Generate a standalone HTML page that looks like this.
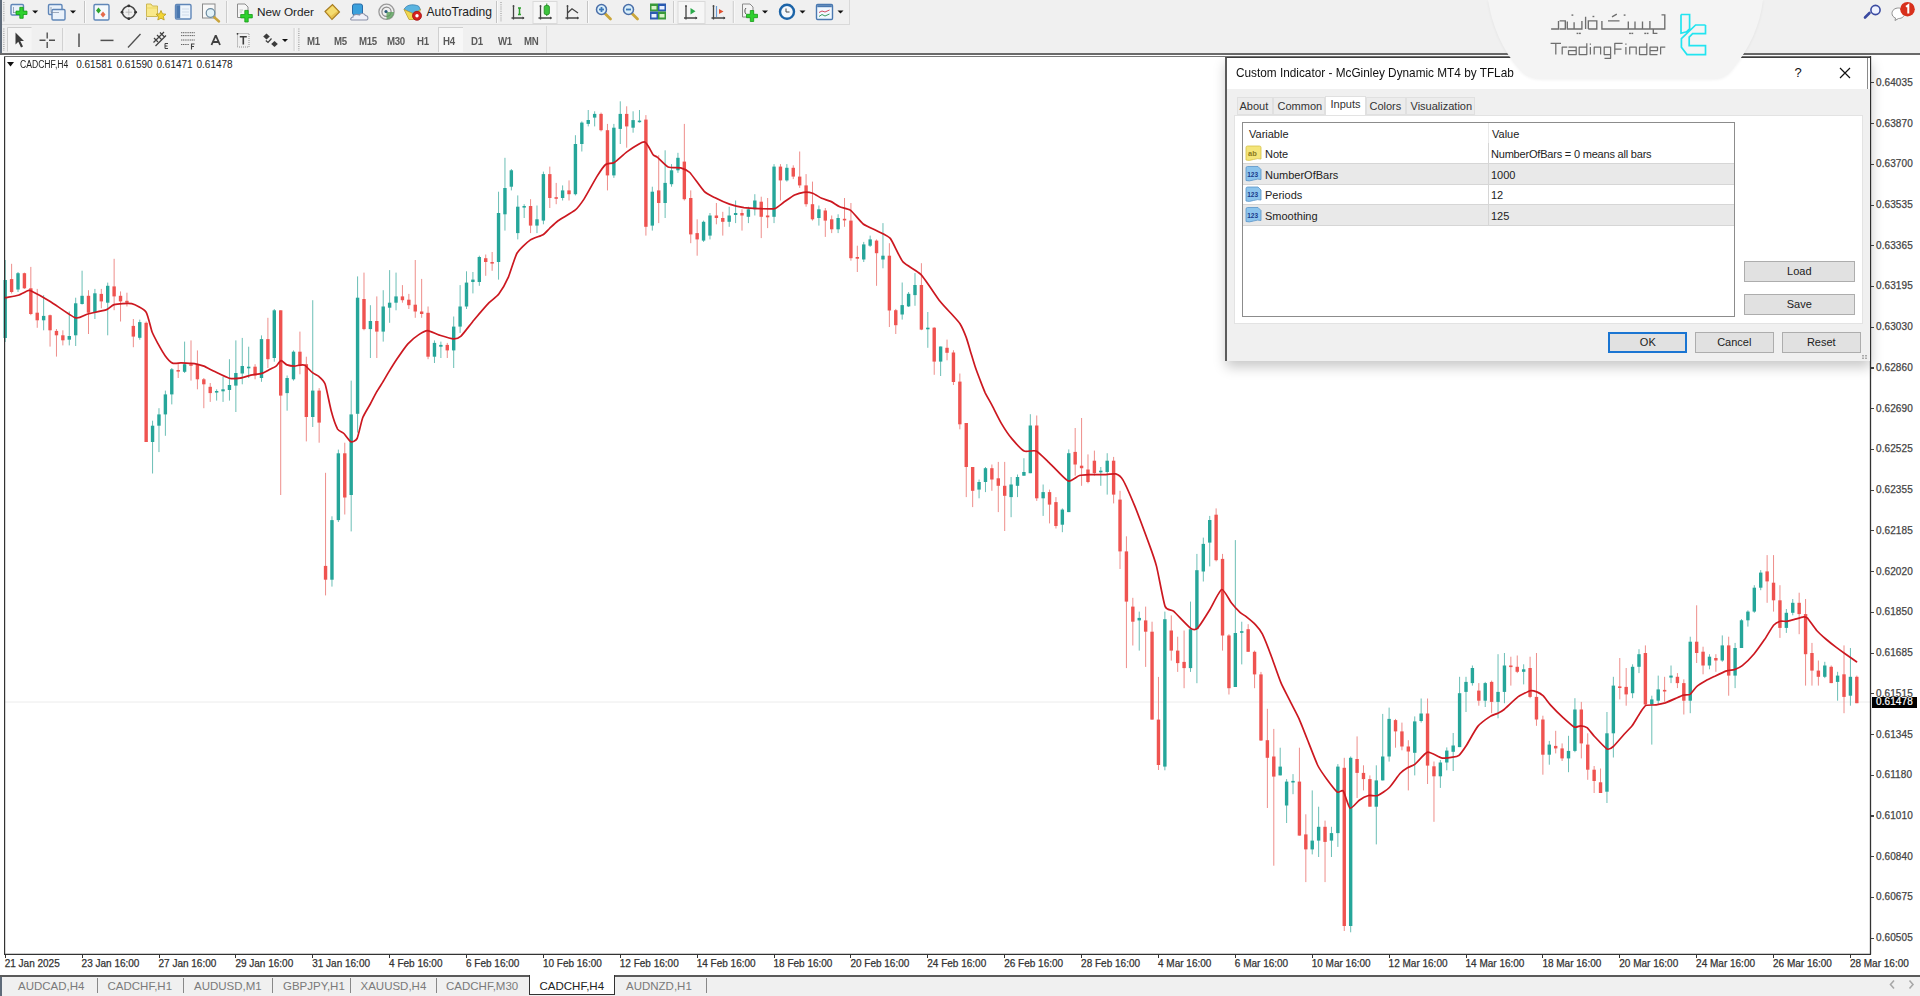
<!DOCTYPE html>
<html><head><meta charset="utf-8">
<style>
*{margin:0;padding:0;box-sizing:border-box}
html,body{width:1920px;height:996px;overflow:hidden;background:#f0f0f0;font-family:"Liberation Sans",sans-serif;position:relative}
.abs{position:absolute}
#leftstrip{position:absolute;left:0;top:0;width:1.6px;height:996px;background:#5f6b7a}
/* toolbars */
.tb{position:absolute;background:#f0f0f0}
.sep{position:absolute;width:1px;background:#c8c8c8;border-right:1px solid #fff}
.grip{position:absolute;width:2px;border-left:2px dotted #b8b8b8}
.ic{position:absolute}
.tf{position:absolute;top:34.5px;font-size:10.5px;color:#5a5a5a;letter-spacing:-0.3px;font-weight:bold;transform:scaleX(0.92);transform-origin:left}
/* chart */
#chartwin{position:absolute;left:2px;top:55px;width:1918px;height:921px;background:#fff}
#chartsvg{position:absolute;left:0;top:0}
.pl{position:absolute;left:1876px;font-size:10px;color:#454545;line-height:12px;letter-spacing:0.1px;-webkit-text-stroke:0.25px #454545}
.ptick{position:absolute;left:1871px;width:2.5px;height:1.2px;background:#444}
.tl{position:absolute;top:958px;font-size:10px;color:#333;line-height:12px;white-space:nowrap;-webkit-text-stroke:0.25px #333}
.ttick{position:absolute;top:955px;width:1px;height:3px;background:#333}
/* tabs */
.tab{position:absolute;top:978.5px;font-size:11.5px;color:#7a7a7a;white-space:nowrap;line-height:14px}
.tsep{position:absolute;top:978px;width:1px;height:15px;background:#888}
/* dialog */
#dlg{position:absolute;left:1224.5px;top:57px;width:645.5px;height:304px;background:#f0f0f0;border-left:2px solid #5c5c5c;border-top:1px solid #3c3c3c;box-shadow:1px 6px 12px rgba(0,0,0,0.22)}
#dlgtitle{position:absolute;left:0;top:0;width:643px;height:30.5px;background:#fff}
.dtab{position:absolute;font-size:11px;color:#333;line-height:14px;white-space:nowrap}
.btn{position:absolute;background:#e1e1e1;border:1px solid #adadad;font-size:11px;color:#222;text-align:center}
.row{position:absolute;left:0;width:491px;height:20.5px}
.vt{position:absolute;font-size:11px;color:#222;line-height:13px;white-space:nowrap}
</style></head>
<body>
<div id="leftstrip"></div>

<!-- toolbar row 1 -->
<div class="abs" style="left:2px;top:0;width:848px;height:25px;border-bottom:1px solid #d9d9d9;border-right:1px solid #d9d9d9"></div>
<div class="abs" style="left:2px;top:26px;width:545px;height:27px;border-right:1px solid #d9d9d9"></div>

<div class="abs" style="left:0;top:53px;width:1920px;height:2px;background:#6a6a6a"></div>

<!-- text in toolbar -->
<div class="abs" style="left:257px;top:4.5px;font-size:11.8px;color:#222;white-space:nowrap">New Order</div>
<div class="abs" style="left:426.5px;top:4.5px;font-size:12.1px;color:#222;white-space:nowrap">AutoTrading</div>
<div class="tf" style="left:307px">M1</div>
<div class="tf" style="left:334px">M5</div>
<div class="tf" style="left:359px">M15</div>
<div class="tf" style="left:387px">M30</div>
<div class="tf" style="left:417px">H1</div>
<div class="abs" style="left:438px;top:27px;width:25px;height:25px;background:#f7f7f7;border-top:1px solid #d0d0d0;border-left:1px solid #d0d0d0"></div>
<div class="tf" style="left:443px">H4</div>
<div class="tf" style="left:471px">D1</div>
<div class="tf" style="left:498px">W1</div>
<div class="tf" style="left:524px">MN</div>

<!-- chart window -->
<div id="chartwin" style="left:0;top:55px;width:1920px;height:920px;"></div>
<svg id="chartsvg" width="1920" height="996" style="position:absolute;left:0;top:0">
<rect x="2" y="55" width="1918" height="920" fill="#fff"/>
<line x1="5" y1="702" x2="1870" y2="702" stroke="#ececec" stroke-width="1"/>
<rect x="4.70" y="260.0" width="1" height="82.0" fill="#6cbfb6"/>
<rect x="11.11" y="263.8" width="1" height="29.7" fill="#ee8e8b"/>
<rect x="17.51" y="272.0" width="1" height="20.0" fill="#6cbfb6"/>
<rect x="23.92" y="272.6" width="1" height="16.3" fill="#ee8e8b"/>
<rect x="30.33" y="266.9" width="1" height="48.3" fill="#ee8e8b"/>
<rect x="36.73" y="288.9" width="1" height="38.9" fill="#ee8e8b"/>
<rect x="43.14" y="295.2" width="1" height="35.1" fill="#6cbfb6"/>
<rect x="49.55" y="314.6" width="1" height="32.0" fill="#ee8e8b"/>
<rect x="55.96" y="329.0" width="1" height="27.6" fill="#ee8e8b"/>
<rect x="62.36" y="330.3" width="1" height="15.1" fill="#ee8e8b"/>
<rect x="68.77" y="311.5" width="1" height="33.9" fill="#6cbfb6"/>
<rect x="75.18" y="297.7" width="1" height="48.3" fill="#6cbfb6"/>
<rect x="81.58" y="270.7" width="1" height="33.9" fill="#6cbfb6"/>
<rect x="87.99" y="290.2" width="1" height="43.8" fill="#ee8e8b"/>
<rect x="94.40" y="288.9" width="1" height="30.1" fill="#6cbfb6"/>
<rect x="100.81" y="288.9" width="1" height="19.4" fill="#ee8e8b"/>
<rect x="107.21" y="282.6" width="1" height="52.7" fill="#6cbfb6"/>
<rect x="113.62" y="258.8" width="1" height="51.4" fill="#ee8e8b"/>
<rect x="120.03" y="291.4" width="1" height="30.1" fill="#ee8e8b"/>
<rect x="126.43" y="292.7" width="1" height="13.8" fill="#ee8e8b"/>
<rect x="132.84" y="319.0" width="1" height="28.2" fill="#ee8e8b"/>
<rect x="139.25" y="319.6" width="1" height="20.1" fill="#6cbfb6"/>
<rect x="145.65" y="321.5" width="1" height="120.5" fill="#ee8e8b"/>
<rect x="152.06" y="420.7" width="1" height="52.8" fill="#6cbfb6"/>
<rect x="158.47" y="408.2" width="1" height="43.9" fill="#6cbfb6"/>
<rect x="164.88" y="390.6" width="1" height="45.2" fill="#6cbfb6"/>
<rect x="171.28" y="368.0" width="1" height="36.4" fill="#6cbfb6"/>
<rect x="177.69" y="363.0" width="1" height="15.0" fill="#ee8e8b"/>
<rect x="184.10" y="341.6" width="1" height="31.4" fill="#6cbfb6"/>
<rect x="190.50" y="340.4" width="1" height="40.2" fill="#ee8e8b"/>
<rect x="196.91" y="350.4" width="1" height="38.9" fill="#ee8e8b"/>
<rect x="203.32" y="378.0" width="1" height="30.2" fill="#ee8e8b"/>
<rect x="209.72" y="383.0" width="1" height="18.9" fill="#ee8e8b"/>
<rect x="216.13" y="389.3" width="1" height="11.3" fill="#6cbfb6"/>
<rect x="222.54" y="376.8" width="1" height="25.1" fill="#6cbfb6"/>
<rect x="228.94" y="359.2" width="1" height="41.4" fill="#6cbfb6"/>
<rect x="235.35" y="340.4" width="1" height="71.6" fill="#6cbfb6"/>
<rect x="241.76" y="337.9" width="1" height="46.4" fill="#6cbfb6"/>
<rect x="248.17" y="346.7" width="1" height="31.3" fill="#6cbfb6"/>
<rect x="254.57" y="364.2" width="1" height="15.1" fill="#ee8e8b"/>
<rect x="260.98" y="335.4" width="1" height="46.4" fill="#6cbfb6"/>
<rect x="267.39" y="317.8" width="1" height="50.2" fill="#ee8e8b"/>
<rect x="273.79" y="309.0" width="1" height="52.7" fill="#6cbfb6"/>
<rect x="280.20" y="310.3" width="1" height="184.7" fill="#ee8e8b"/>
<rect x="286.61" y="375.5" width="1" height="35.2" fill="#6cbfb6"/>
<rect x="293.01" y="350.4" width="1" height="30.2" fill="#6cbfb6"/>
<rect x="299.42" y="331.6" width="1" height="42.7" fill="#ee8e8b"/>
<rect x="305.83" y="356.7" width="1" height="84.7" fill="#ee8e8b"/>
<rect x="312.24" y="300.2" width="1" height="126.8" fill="#6cbfb6"/>
<rect x="318.64" y="388.1" width="1" height="54.6" fill="#ee8e8b"/>
<rect x="325.05" y="472.8" width="1" height="122.6" fill="#ee8e8b"/>
<rect x="331.46" y="516.3" width="1" height="70.3" fill="#6cbfb6"/>
<rect x="337.86" y="449.6" width="1" height="72.4" fill="#6cbfb6"/>
<rect x="344.27" y="442.7" width="1" height="71.8" fill="#ee8e8b"/>
<rect x="350.68" y="380.6" width="1" height="150.8" fill="#6cbfb6"/>
<rect x="357.08" y="276.4" width="1" height="156.2" fill="#6cbfb6"/>
<rect x="363.49" y="272.6" width="1" height="57.7" fill="#ee8e8b"/>
<rect x="369.90" y="305.2" width="1" height="52.8" fill="#6cbfb6"/>
<rect x="376.31" y="296.4" width="1" height="61.6" fill="#ee8e8b"/>
<rect x="382.71" y="290.2" width="1" height="51.4" fill="#6cbfb6"/>
<rect x="389.12" y="270.1" width="1" height="52.7" fill="#6cbfb6"/>
<rect x="395.53" y="272.6" width="1" height="37.7" fill="#6cbfb6"/>
<rect x="401.93" y="285.1" width="1" height="17.6" fill="#ee8e8b"/>
<rect x="408.34" y="293.9" width="1" height="15.1" fill="#ee8e8b"/>
<rect x="414.75" y="260.0" width="1" height="57.8" fill="#ee8e8b"/>
<rect x="421.15" y="278.9" width="1" height="38.9" fill="#ee8e8b"/>
<rect x="427.56" y="306.5" width="1" height="52.7" fill="#ee8e8b"/>
<rect x="433.97" y="340.4" width="1" height="22.6" fill="#6cbfb6"/>
<rect x="440.38" y="341.6" width="1" height="16.4" fill="#6cbfb6"/>
<rect x="446.78" y="342.9" width="1" height="15.1" fill="#ee8e8b"/>
<rect x="453.19" y="316.5" width="1" height="51.5" fill="#6cbfb6"/>
<rect x="459.60" y="285.1" width="1" height="47.8" fill="#6cbfb6"/>
<rect x="466.00" y="271.3" width="1" height="37.7" fill="#6cbfb6"/>
<rect x="472.41" y="272.0" width="1" height="21.4" fill="#6cbfb6"/>
<rect x="478.82" y="255.7" width="1" height="30.1" fill="#6cbfb6"/>
<rect x="485.22" y="254.5" width="1" height="21.3" fill="#ee8e8b"/>
<rect x="491.63" y="252.0" width="1" height="18.8" fill="#ee8e8b"/>
<rect x="498.04" y="191.7" width="1" height="87.9" fill="#6cbfb6"/>
<rect x="504.45" y="157.8" width="1" height="72.8" fill="#6cbfb6"/>
<rect x="510.85" y="169.0" width="1" height="21.4" fill="#6cbfb6"/>
<rect x="517.26" y="195.4" width="1" height="44.0" fill="#6cbfb6"/>
<rect x="523.67" y="204.2" width="1" height="13.8" fill="#6cbfb6"/>
<rect x="530.07" y="199.2" width="1" height="33.9" fill="#ee8e8b"/>
<rect x="536.48" y="205.5" width="1" height="27.6" fill="#6cbfb6"/>
<rect x="542.89" y="171.6" width="1" height="52.7" fill="#6cbfb6"/>
<rect x="549.30" y="166.6" width="1" height="41.4" fill="#ee8e8b"/>
<rect x="555.70" y="182.9" width="1" height="21.3" fill="#ee8e8b"/>
<rect x="562.11" y="185.4" width="1" height="15.1" fill="#6cbfb6"/>
<rect x="568.52" y="180.4" width="1" height="20.1" fill="#ee8e8b"/>
<rect x="574.92" y="135.2" width="1" height="60.2" fill="#6cbfb6"/>
<rect x="581.33" y="121.4" width="1" height="30.1" fill="#6cbfb6"/>
<rect x="587.74" y="110.0" width="1" height="16.4" fill="#6cbfb6"/>
<rect x="594.14" y="111.3" width="1" height="15.1" fill="#6cbfb6"/>
<rect x="600.55" y="112.6" width="1" height="18.8" fill="#ee8e8b"/>
<rect x="606.96" y="123.9" width="1" height="66.5" fill="#ee8e8b"/>
<rect x="613.37" y="123.9" width="1" height="54.0" fill="#6cbfb6"/>
<rect x="619.77" y="101.3" width="1" height="42.7" fill="#6cbfb6"/>
<rect x="626.18" y="106.3" width="1" height="41.4" fill="#ee8e8b"/>
<rect x="632.59" y="111.3" width="1" height="21.4" fill="#6cbfb6"/>
<rect x="638.99" y="110.0" width="1" height="12.6" fill="#6cbfb6"/>
<rect x="645.40" y="115.1" width="1" height="120.5" fill="#ee8e8b"/>
<rect x="651.81" y="186.7" width="1" height="43.9" fill="#6cbfb6"/>
<rect x="658.21" y="155.3" width="1" height="67.8" fill="#ee8e8b"/>
<rect x="664.62" y="150.3" width="1" height="67.7" fill="#6cbfb6"/>
<rect x="671.03" y="164.1" width="1" height="22.6" fill="#6cbfb6"/>
<rect x="677.44" y="152.8" width="1" height="20.1" fill="#6cbfb6"/>
<rect x="683.84" y="123.9" width="1" height="76.6" fill="#ee8e8b"/>
<rect x="690.25" y="190.4" width="1" height="52.8" fill="#ee8e8b"/>
<rect x="696.66" y="219.3" width="1" height="36.4" fill="#ee8e8b"/>
<rect x="703.06" y="220.6" width="1" height="21.3" fill="#6cbfb6"/>
<rect x="709.47" y="213.0" width="1" height="26.4" fill="#6cbfb6"/>
<rect x="715.88" y="203.0" width="1" height="21.3" fill="#ee8e8b"/>
<rect x="722.28" y="211.8" width="1" height="23.8" fill="#ee8e8b"/>
<rect x="728.69" y="206.7" width="1" height="20.1" fill="#6cbfb6"/>
<rect x="735.10" y="200.5" width="1" height="22.6" fill="#6cbfb6"/>
<rect x="741.50" y="209.3" width="1" height="21.3" fill="#ee8e8b"/>
<rect x="747.91" y="206.7" width="1" height="16.4" fill="#6cbfb6"/>
<rect x="754.32" y="194.2" width="1" height="21.3" fill="#6cbfb6"/>
<rect x="760.73" y="196.7" width="1" height="41.4" fill="#ee8e8b"/>
<rect x="767.13" y="198.0" width="1" height="30.1" fill="#ee8e8b"/>
<rect x="773.54" y="164.1" width="1" height="59.0" fill="#6cbfb6"/>
<rect x="779.95" y="164.1" width="1" height="36.4" fill="#ee8e8b"/>
<rect x="786.35" y="164.1" width="1" height="17.5" fill="#6cbfb6"/>
<rect x="792.76" y="165.3" width="1" height="13.8" fill="#ee8e8b"/>
<rect x="799.17" y="151.5" width="1" height="36.4" fill="#ee8e8b"/>
<rect x="805.58" y="174.1" width="1" height="32.6" fill="#ee8e8b"/>
<rect x="811.98" y="181.6" width="1" height="39.0" fill="#ee8e8b"/>
<rect x="818.39" y="205.5" width="1" height="20.1" fill="#6cbfb6"/>
<rect x="824.80" y="208.0" width="1" height="28.9" fill="#ee8e8b"/>
<rect x="831.20" y="215.5" width="1" height="17.6" fill="#ee8e8b"/>
<rect x="837.61" y="214.3" width="1" height="18.8" fill="#6cbfb6"/>
<rect x="844.02" y="198.0" width="1" height="28.8" fill="#ee8e8b"/>
<rect x="850.42" y="203.0" width="1" height="57.7" fill="#ee8e8b"/>
<rect x="856.83" y="245.7" width="1" height="26.3" fill="#ee8e8b"/>
<rect x="863.24" y="241.9" width="1" height="20.1" fill="#6cbfb6"/>
<rect x="869.65" y="235.6" width="1" height="11.3" fill="#6cbfb6"/>
<rect x="876.05" y="239.4" width="1" height="46.4" fill="#ee8e8b"/>
<rect x="882.46" y="223.1" width="1" height="45.2" fill="#6cbfb6"/>
<rect x="888.87" y="243.2" width="1" height="83.8" fill="#ee8e8b"/>
<rect x="895.27" y="308.9" width="1" height="25.1" fill="#ee8e8b"/>
<rect x="901.68" y="282.5" width="1" height="37.1" fill="#6cbfb6"/>
<rect x="908.09" y="292.0" width="1" height="15.0" fill="#6cbfb6"/>
<rect x="914.49" y="273.1" width="1" height="32.7" fill="#6cbfb6"/>
<rect x="920.90" y="263.2" width="1" height="67.0" fill="#ee8e8b"/>
<rect x="927.31" y="312.0" width="1" height="35.8" fill="#6cbfb6"/>
<rect x="933.72" y="327.1" width="1" height="47.7" fill="#ee8e8b"/>
<rect x="940.12" y="346.5" width="1" height="29.5" fill="#6cbfb6"/>
<rect x="946.53" y="339.6" width="1" height="20.7" fill="#ee8e8b"/>
<rect x="952.94" y="350.2" width="1" height="34.8" fill="#ee8e8b"/>
<rect x="959.34" y="373.5" width="1" height="55.8" fill="#ee8e8b"/>
<rect x="965.75" y="423.0" width="1" height="74.1" fill="#ee8e8b"/>
<rect x="972.16" y="467.0" width="1" height="40.1" fill="#ee8e8b"/>
<rect x="978.56" y="479.5" width="1" height="18.8" fill="#6cbfb6"/>
<rect x="984.97" y="467.0" width="1" height="25.1" fill="#6cbfb6"/>
<rect x="991.38" y="464.5" width="1" height="26.3" fill="#ee8e8b"/>
<rect x="997.79" y="461.9" width="1" height="50.2" fill="#ee8e8b"/>
<rect x="1004.19" y="461.9" width="1" height="69.1" fill="#ee8e8b"/>
<rect x="1010.60" y="477.0" width="1" height="40.2" fill="#6cbfb6"/>
<rect x="1017.01" y="474.5" width="1" height="22.6" fill="#6cbfb6"/>
<rect x="1023.41" y="458.2" width="1" height="17.5" fill="#6cbfb6"/>
<rect x="1029.82" y="414.2" width="1" height="59.0" fill="#6cbfb6"/>
<rect x="1036.23" y="415.5" width="1" height="85.4" fill="#ee8e8b"/>
<rect x="1042.63" y="484.5" width="1" height="31.4" fill="#6cbfb6"/>
<rect x="1049.04" y="489.6" width="1" height="33.8" fill="#ee8e8b"/>
<rect x="1055.45" y="497.1" width="1" height="31.4" fill="#ee8e8b"/>
<rect x="1061.86" y="508.4" width="1" height="23.8" fill="#6cbfb6"/>
<rect x="1068.26" y="449.4" width="1" height="62.7" fill="#6cbfb6"/>
<rect x="1074.67" y="428.0" width="1" height="47.7" fill="#ee8e8b"/>
<rect x="1081.08" y="418.0" width="1" height="67.8" fill="#ee8e8b"/>
<rect x="1087.48" y="454.4" width="1" height="28.9" fill="#ee8e8b"/>
<rect x="1093.89" y="450.6" width="1" height="25.1" fill="#ee8e8b"/>
<rect x="1100.30" y="467.0" width="1" height="18.8" fill="#6cbfb6"/>
<rect x="1106.70" y="453.2" width="1" height="41.4" fill="#6cbfb6"/>
<rect x="1113.11" y="456.9" width="1" height="46.5" fill="#ee8e8b"/>
<rect x="1119.52" y="490.8" width="1" height="78.2" fill="#ee8e8b"/>
<rect x="1125.92" y="536.3" width="1" height="131.8" fill="#ee8e8b"/>
<rect x="1132.33" y="597.8" width="1" height="47.7" fill="#ee8e8b"/>
<rect x="1138.74" y="611.6" width="1" height="39.0" fill="#6cbfb6"/>
<rect x="1145.15" y="606.6" width="1" height="60.3" fill="#ee8e8b"/>
<rect x="1151.55" y="621.7" width="1" height="97.9" fill="#ee8e8b"/>
<rect x="1157.96" y="676.9" width="1" height="93.1" fill="#ee8e8b"/>
<rect x="1164.37" y="611.6" width="1" height="158.7" fill="#6cbfb6"/>
<rect x="1170.77" y="615.4" width="1" height="45.2" fill="#ee8e8b"/>
<rect x="1177.18" y="636.7" width="1" height="35.2" fill="#ee8e8b"/>
<rect x="1183.59" y="630.5" width="1" height="57.7" fill="#ee8e8b"/>
<rect x="1190.00" y="601.6" width="1" height="70.3" fill="#6cbfb6"/>
<rect x="1196.40" y="553.9" width="1" height="129.3" fill="#6cbfb6"/>
<rect x="1202.81" y="537.6" width="1" height="43.9" fill="#6cbfb6"/>
<rect x="1209.22" y="515.9" width="1" height="50.5" fill="#6cbfb6"/>
<rect x="1215.62" y="508.4" width="1" height="53.0" fill="#ee8e8b"/>
<rect x="1222.03" y="553.9" width="1" height="96.7" fill="#ee8e8b"/>
<rect x="1228.44" y="634.2" width="1" height="60.3" fill="#ee8e8b"/>
<rect x="1234.84" y="540.1" width="1" height="146.9" fill="#6cbfb6"/>
<rect x="1241.25" y="621.7" width="1" height="42.7" fill="#6cbfb6"/>
<rect x="1247.66" y="624.2" width="1" height="27.6" fill="#ee8e8b"/>
<rect x="1254.07" y="650.6" width="1" height="37.6" fill="#ee8e8b"/>
<rect x="1260.47" y="671.9" width="1" height="69.0" fill="#ee8e8b"/>
<rect x="1266.88" y="708.8" width="1" height="99.2" fill="#ee8e8b"/>
<rect x="1273.29" y="728.9" width="1" height="136.8" fill="#ee8e8b"/>
<rect x="1279.69" y="747.7" width="1" height="27.7" fill="#6cbfb6"/>
<rect x="1286.10" y="779.1" width="1" height="43.9" fill="#6cbfb6"/>
<rect x="1292.51" y="774.1" width="1" height="20.1" fill="#6cbfb6"/>
<rect x="1298.91" y="747.7" width="1" height="87.9" fill="#ee8e8b"/>
<rect x="1305.32" y="814.3" width="1" height="67.8" fill="#ee8e8b"/>
<rect x="1311.73" y="790.4" width="1" height="64.0" fill="#6cbfb6"/>
<rect x="1318.13" y="806.7" width="1" height="50.3" fill="#6cbfb6"/>
<rect x="1324.54" y="820.6" width="1" height="61.5" fill="#ee8e8b"/>
<rect x="1330.95" y="826.8" width="1" height="30.2" fill="#6cbfb6"/>
<rect x="1337.36" y="764.1" width="1" height="82.8" fill="#6cbfb6"/>
<rect x="1343.76" y="757.8" width="1" height="173.2" fill="#ee8e8b"/>
<rect x="1350.17" y="756.5" width="1" height="175.8" fill="#6cbfb6"/>
<rect x="1356.58" y="736.4" width="1" height="61.6" fill="#ee8e8b"/>
<rect x="1362.98" y="765.3" width="1" height="25.1" fill="#ee8e8b"/>
<rect x="1369.39" y="775.4" width="1" height="31.3" fill="#ee8e8b"/>
<rect x="1375.80" y="765.3" width="1" height="79.1" fill="#6cbfb6"/>
<rect x="1382.21" y="713.9" width="1" height="66.5" fill="#6cbfb6"/>
<rect x="1388.61" y="707.6" width="1" height="54.0" fill="#6cbfb6"/>
<rect x="1395.02" y="718.9" width="1" height="28.8" fill="#ee8e8b"/>
<rect x="1401.43" y="722.6" width="1" height="27.7" fill="#ee8e8b"/>
<rect x="1407.83" y="740.2" width="1" height="50.2" fill="#ee8e8b"/>
<rect x="1414.24" y="716.4" width="1" height="59.0" fill="#6cbfb6"/>
<rect x="1420.65" y="698.5" width="1" height="24.1" fill="#6cbfb6"/>
<rect x="1427.05" y="698.5" width="1" height="85.5" fill="#ee8e8b"/>
<rect x="1433.46" y="761.5" width="1" height="60.3" fill="#ee8e8b"/>
<rect x="1439.87" y="760.0" width="1" height="27.9" fill="#6cbfb6"/>
<rect x="1446.28" y="747.4" width="1" height="22.9" fill="#6cbfb6"/>
<rect x="1452.68" y="733.0" width="1" height="38.0" fill="#6cbfb6"/>
<rect x="1459.09" y="676.8" width="1" height="70.3" fill="#6cbfb6"/>
<rect x="1465.50" y="676.8" width="1" height="35.2" fill="#6cbfb6"/>
<rect x="1471.90" y="665.5" width="1" height="20.1" fill="#6cbfb6"/>
<rect x="1478.31" y="683.1" width="1" height="22.6" fill="#ee8e8b"/>
<rect x="1484.72" y="681.9" width="1" height="25.1" fill="#6cbfb6"/>
<rect x="1491.12" y="680.6" width="1" height="32.6" fill="#ee8e8b"/>
<rect x="1497.53" y="654.2" width="1" height="64.1" fill="#6cbfb6"/>
<rect x="1503.94" y="653.0" width="1" height="50.2" fill="#6cbfb6"/>
<rect x="1510.35" y="656.7" width="1" height="28.9" fill="#ee8e8b"/>
<rect x="1516.75" y="655.5" width="1" height="17.6" fill="#ee8e8b"/>
<rect x="1523.16" y="664.3" width="1" height="20.1" fill="#6cbfb6"/>
<rect x="1529.57" y="656.7" width="1" height="41.5" fill="#ee8e8b"/>
<rect x="1535.97" y="653.0" width="1" height="72.8" fill="#ee8e8b"/>
<rect x="1542.38" y="715.7" width="1" height="59.0" fill="#ee8e8b"/>
<rect x="1548.79" y="740.9" width="1" height="23.8" fill="#6cbfb6"/>
<rect x="1555.19" y="730.8" width="1" height="22.6" fill="#ee8e8b"/>
<rect x="1561.60" y="743.4" width="1" height="17.6" fill="#ee8e8b"/>
<rect x="1568.01" y="735.8" width="1" height="36.4" fill="#6cbfb6"/>
<rect x="1574.41" y="698.2" width="1" height="54.0" fill="#6cbfb6"/>
<rect x="1580.82" y="701.9" width="1" height="56.5" fill="#ee8e8b"/>
<rect x="1587.23" y="733.3" width="1" height="46.5" fill="#ee8e8b"/>
<rect x="1593.64" y="766.0" width="1" height="27.0" fill="#ee8e8b"/>
<rect x="1600.04" y="768.5" width="1" height="24.5" fill="#ee8e8b"/>
<rect x="1606.45" y="712.0" width="1" height="91.0" fill="#6cbfb6"/>
<rect x="1612.86" y="676.8" width="1" height="80.7" fill="#6cbfb6"/>
<rect x="1619.26" y="658.0" width="1" height="41.4" fill="#ee8e8b"/>
<rect x="1625.67" y="668.0" width="1" height="37.7" fill="#ee8e8b"/>
<rect x="1632.08" y="664.3" width="1" height="33.9" fill="#6cbfb6"/>
<rect x="1638.49" y="649.2" width="1" height="23.9" fill="#6cbfb6"/>
<rect x="1644.89" y="645.4" width="1" height="60.3" fill="#ee8e8b"/>
<rect x="1651.30" y="695.7" width="1" height="48.9" fill="#6cbfb6"/>
<rect x="1657.71" y="675.6" width="1" height="28.9" fill="#6cbfb6"/>
<rect x="1664.11" y="676.8" width="1" height="25.1" fill="#ee8e8b"/>
<rect x="1670.52" y="665.5" width="1" height="17.6" fill="#6cbfb6"/>
<rect x="1676.93" y="673.1" width="1" height="15.0" fill="#ee8e8b"/>
<rect x="1683.33" y="679.3" width="1" height="35.2" fill="#ee8e8b"/>
<rect x="1689.74" y="636.7" width="1" height="76.5" fill="#6cbfb6"/>
<rect x="1696.15" y="605.3" width="1" height="57.7" fill="#ee8e8b"/>
<rect x="1702.56" y="646.7" width="1" height="27.6" fill="#ee8e8b"/>
<rect x="1708.96" y="654.2" width="1" height="15.1" fill="#6cbfb6"/>
<rect x="1715.37" y="654.2" width="1" height="17.6" fill="#ee8e8b"/>
<rect x="1721.78" y="635.4" width="1" height="26.4" fill="#6cbfb6"/>
<rect x="1728.18" y="636.7" width="1" height="59.0" fill="#ee8e8b"/>
<rect x="1734.59" y="642.9" width="1" height="45.2" fill="#6cbfb6"/>
<rect x="1741.00" y="619.1" width="1" height="28.9" fill="#6cbfb6"/>
<rect x="1747.40" y="610.3" width="1" height="16.3" fill="#6cbfb6"/>
<rect x="1753.81" y="585.2" width="1" height="27.6" fill="#6cbfb6"/>
<rect x="1760.22" y="570.1" width="1" height="20.1" fill="#6cbfb6"/>
<rect x="1766.62" y="555.1" width="1" height="47.7" fill="#ee8e8b"/>
<rect x="1773.03" y="555.1" width="1" height="56.5" fill="#ee8e8b"/>
<rect x="1779.44" y="585.2" width="1" height="52.7" fill="#ee8e8b"/>
<rect x="1785.85" y="609.0" width="1" height="23.9" fill="#6cbfb6"/>
<rect x="1792.25" y="599.0" width="1" height="16.3" fill="#6cbfb6"/>
<rect x="1798.66" y="592.7" width="1" height="41.5" fill="#ee8e8b"/>
<rect x="1805.07" y="599.0" width="1" height="86.6" fill="#ee8e8b"/>
<rect x="1811.47" y="642.9" width="1" height="42.7" fill="#ee8e8b"/>
<rect x="1817.88" y="660.5" width="1" height="25.1" fill="#ee8e8b"/>
<rect x="1824.29" y="661.8" width="1" height="16.3" fill="#6cbfb6"/>
<rect x="1830.70" y="665.5" width="1" height="17.6" fill="#ee8e8b"/>
<rect x="1837.10" y="671.8" width="1" height="28.9" fill="#6cbfb6"/>
<rect x="1843.51" y="645.4" width="1" height="67.8" fill="#ee8e8b"/>
<rect x="1849.92" y="648.0" width="1" height="57.7" fill="#6cbfb6"/>
<rect x="1856.32" y="675.6" width="1" height="27.6" fill="#ee8e8b"/>
<rect x="3.50" y="280.0" width="3.4" height="58.0" fill="#26a69a"/>
<rect x="9.91" y="279.1" width="3.4" height="12.9" fill="#ef5350"/>
<rect x="16.31" y="273.2" width="3.4" height="16.3" fill="#26a69a"/>
<rect x="22.72" y="273.2" width="3.4" height="15.1" fill="#ef5350"/>
<rect x="29.13" y="288.3" width="3.4" height="25.7" fill="#ef5350"/>
<rect x="35.53" y="312.7" width="3.4" height="7.6" fill="#ef5350"/>
<rect x="41.94" y="315.9" width="3.4" height="4.4" fill="#26a69a"/>
<rect x="48.35" y="315.2" width="3.4" height="15.1" fill="#ef5350"/>
<rect x="54.76" y="330.9" width="3.4" height="4.4" fill="#ef5350"/>
<rect x="61.16" y="335.3" width="3.4" height="5.0" fill="#ef5350"/>
<rect x="67.57" y="336.0" width="3.4" height="3.7" fill="#26a69a"/>
<rect x="73.98" y="303.3" width="3.4" height="32.0" fill="#26a69a"/>
<rect x="80.38" y="295.8" width="3.4" height="8.2" fill="#26a69a"/>
<rect x="86.79" y="295.8" width="3.4" height="16.9" fill="#ef5350"/>
<rect x="93.20" y="293.3" width="3.4" height="19.4" fill="#26a69a"/>
<rect x="99.61" y="293.9" width="3.4" height="7.5" fill="#ef5350"/>
<rect x="106.01" y="285.8" width="3.4" height="16.9" fill="#26a69a"/>
<rect x="112.42" y="286.4" width="3.4" height="10.0" fill="#ef5350"/>
<rect x="118.83" y="295.8" width="3.4" height="5.6" fill="#ef5350"/>
<rect x="125.23" y="300.8" width="3.4" height="1.9" fill="#ef5350"/>
<rect x="131.64" y="325.9" width="3.4" height="10.7" fill="#ef5350"/>
<rect x="138.05" y="322.1" width="3.4" height="15.7" fill="#26a69a"/>
<rect x="144.45" y="322.8" width="3.4" height="119.2" fill="#ef5350"/>
<rect x="150.86" y="425.7" width="3.4" height="16.3" fill="#26a69a"/>
<rect x="157.27" y="414.4" width="3.4" height="11.3" fill="#26a69a"/>
<rect x="163.68" y="394.4" width="3.4" height="20.0" fill="#26a69a"/>
<rect x="170.08" y="369.3" width="3.4" height="25.1" fill="#26a69a"/>
<rect x="176.49" y="370.0" width="3.4" height="1.6" fill="#ef5350"/>
<rect x="182.90" y="364.2" width="3.4" height="7.6" fill="#26a69a"/>
<rect x="189.30" y="364.2" width="3.4" height="1.6" fill="#ef5350"/>
<rect x="195.71" y="364.2" width="3.4" height="15.1" fill="#ef5350"/>
<rect x="202.12" y="379.3" width="3.4" height="5.0" fill="#ef5350"/>
<rect x="208.52" y="386.8" width="3.4" height="6.3" fill="#ef5350"/>
<rect x="214.93" y="391.0" width="3.4" height="1.6" fill="#26a69a"/>
<rect x="221.34" y="389.3" width="3.4" height="2.0" fill="#26a69a"/>
<rect x="227.75" y="385.0" width="3.4" height="5.0" fill="#26a69a"/>
<rect x="234.15" y="373.0" width="3.4" height="12.6" fill="#26a69a"/>
<rect x="240.56" y="366.0" width="3.4" height="7.5" fill="#26a69a"/>
<rect x="246.97" y="366.7" width="3.4" height="1.6" fill="#26a69a"/>
<rect x="253.37" y="366.7" width="3.4" height="8.8" fill="#ef5350"/>
<rect x="259.78" y="339.1" width="3.4" height="38.9" fill="#26a69a"/>
<rect x="266.19" y="339.1" width="3.4" height="20.1" fill="#ef5350"/>
<rect x="272.59" y="310.3" width="3.4" height="47.7" fill="#26a69a"/>
<rect x="279.00" y="310.3" width="3.4" height="85.3" fill="#ef5350"/>
<rect x="285.41" y="378.0" width="3.4" height="15.1" fill="#26a69a"/>
<rect x="291.81" y="351.7" width="3.4" height="27.6" fill="#26a69a"/>
<rect x="298.22" y="351.7" width="3.4" height="13.8" fill="#ef5350"/>
<rect x="304.63" y="364.2" width="3.4" height="52.8" fill="#ef5350"/>
<rect x="311.04" y="390.6" width="3.4" height="26.4" fill="#26a69a"/>
<rect x="317.44" y="390.6" width="3.4" height="32.0" fill="#ef5350"/>
<rect x="323.85" y="565.9" width="3.4" height="13.8" fill="#ef5350"/>
<rect x="330.26" y="520.1" width="3.4" height="59.6" fill="#26a69a"/>
<rect x="336.66" y="453.3" width="3.4" height="66.8" fill="#26a69a"/>
<rect x="343.07" y="453.3" width="3.4" height="44.2" fill="#ef5350"/>
<rect x="349.48" y="414.4" width="3.4" height="80.6" fill="#26a69a"/>
<rect x="355.88" y="297.7" width="3.4" height="116.1" fill="#26a69a"/>
<rect x="362.29" y="299.0" width="3.4" height="30.1" fill="#ef5350"/>
<rect x="368.70" y="321.0" width="3.4" height="8.1" fill="#26a69a"/>
<rect x="375.11" y="321.0" width="3.4" height="10.6" fill="#ef5350"/>
<rect x="381.51" y="306.5" width="3.4" height="25.1" fill="#26a69a"/>
<rect x="387.92" y="302.7" width="3.4" height="5.0" fill="#26a69a"/>
<rect x="394.33" y="296.4" width="3.4" height="6.3" fill="#26a69a"/>
<rect x="400.73" y="296.4" width="3.4" height="3.8" fill="#ef5350"/>
<rect x="407.14" y="299.7" width="3.4" height="5.5" fill="#ef5350"/>
<rect x="413.55" y="304.7" width="3.4" height="6.8" fill="#ef5350"/>
<rect x="419.95" y="311.5" width="3.4" height="2.5" fill="#ef5350"/>
<rect x="426.36" y="312.8" width="3.4" height="43.9" fill="#ef5350"/>
<rect x="432.77" y="342.9" width="3.4" height="13.8" fill="#26a69a"/>
<rect x="439.18" y="344.9" width="3.4" height="1.8" fill="#26a69a"/>
<rect x="445.58" y="344.9" width="3.4" height="5.5" fill="#ef5350"/>
<rect x="451.99" y="326.6" width="3.4" height="23.8" fill="#26a69a"/>
<rect x="458.40" y="306.5" width="3.4" height="20.1" fill="#26a69a"/>
<rect x="464.80" y="282.6" width="3.4" height="23.9" fill="#26a69a"/>
<rect x="471.21" y="279.6" width="3.4" height="2.4" fill="#26a69a"/>
<rect x="477.62" y="257.0" width="3.4" height="25.0" fill="#26a69a"/>
<rect x="484.02" y="258.2" width="3.4" height="3.8" fill="#ef5350"/>
<rect x="490.43" y="262.0" width="3.4" height="1.6" fill="#ef5350"/>
<rect x="496.84" y="213.0" width="3.4" height="49.0" fill="#26a69a"/>
<rect x="503.25" y="188.0" width="3.4" height="26.3" fill="#26a69a"/>
<rect x="509.65" y="170.3" width="3.4" height="16.4" fill="#26a69a"/>
<rect x="516.06" y="206.7" width="3.4" height="26.4" fill="#26a69a"/>
<rect x="522.47" y="206.0" width="3.4" height="1.6" fill="#26a69a"/>
<rect x="528.87" y="206.0" width="3.4" height="19.6" fill="#ef5350"/>
<rect x="535.28" y="219.3" width="3.4" height="6.3" fill="#26a69a"/>
<rect x="541.69" y="174.1" width="3.4" height="46.5" fill="#26a69a"/>
<rect x="548.10" y="174.1" width="3.4" height="23.9" fill="#ef5350"/>
<rect x="554.50" y="197.2" width="3.4" height="1.6" fill="#ef5350"/>
<rect x="560.91" y="190.4" width="3.4" height="7.6" fill="#26a69a"/>
<rect x="567.32" y="190.4" width="3.4" height="3.8" fill="#ef5350"/>
<rect x="573.72" y="144.0" width="3.4" height="50.2" fill="#26a69a"/>
<rect x="580.13" y="122.6" width="3.4" height="21.4" fill="#26a69a"/>
<rect x="586.54" y="120.0" width="3.4" height="3.9" fill="#26a69a"/>
<rect x="592.94" y="113.9" width="3.4" height="3.7" fill="#26a69a"/>
<rect x="599.35" y="113.9" width="3.4" height="16.3" fill="#ef5350"/>
<rect x="605.76" y="130.2" width="3.4" height="45.2" fill="#ef5350"/>
<rect x="612.16" y="127.7" width="3.4" height="47.7" fill="#26a69a"/>
<rect x="618.57" y="113.9" width="3.4" height="15.0" fill="#26a69a"/>
<rect x="624.98" y="113.9" width="3.4" height="12.5" fill="#ef5350"/>
<rect x="631.39" y="120.1" width="3.4" height="7.6" fill="#26a69a"/>
<rect x="637.79" y="120.6" width="3.4" height="1.6" fill="#26a69a"/>
<rect x="644.20" y="119.6" width="3.4" height="107.2" fill="#ef5350"/>
<rect x="650.61" y="191.7" width="3.4" height="33.9" fill="#26a69a"/>
<rect x="657.01" y="190.4" width="3.4" height="12.6" fill="#ef5350"/>
<rect x="663.42" y="182.9" width="3.4" height="20.1" fill="#26a69a"/>
<rect x="669.83" y="170.3" width="3.4" height="13.9" fill="#26a69a"/>
<rect x="676.24" y="157.8" width="3.4" height="12.5" fill="#26a69a"/>
<rect x="682.64" y="161.6" width="3.4" height="37.6" fill="#ef5350"/>
<rect x="689.05" y="198.0" width="3.4" height="36.4" fill="#ef5350"/>
<rect x="695.46" y="233.1" width="3.4" height="6.3" fill="#ef5350"/>
<rect x="701.86" y="221.8" width="3.4" height="18.8" fill="#26a69a"/>
<rect x="708.27" y="215.5" width="3.4" height="20.1" fill="#26a69a"/>
<rect x="714.68" y="215.5" width="3.4" height="2.5" fill="#ef5350"/>
<rect x="721.08" y="218.0" width="3.4" height="3.8" fill="#ef5350"/>
<rect x="727.49" y="215.5" width="3.4" height="6.3" fill="#26a69a"/>
<rect x="733.90" y="213.0" width="3.4" height="2.0" fill="#26a69a"/>
<rect x="740.30" y="213.0" width="3.4" height="2.5" fill="#ef5350"/>
<rect x="746.71" y="209.3" width="3.4" height="7.5" fill="#26a69a"/>
<rect x="753.12" y="200.5" width="3.4" height="8.8" fill="#26a69a"/>
<rect x="759.53" y="201.7" width="3.4" height="15.1" fill="#ef5350"/>
<rect x="765.93" y="215.5" width="3.4" height="1.8" fill="#ef5350"/>
<rect x="772.34" y="166.6" width="3.4" height="50.2" fill="#26a69a"/>
<rect x="778.75" y="166.6" width="3.4" height="13.8" fill="#ef5350"/>
<rect x="785.15" y="167.8" width="3.4" height="12.6" fill="#26a69a"/>
<rect x="791.56" y="167.8" width="3.4" height="8.8" fill="#ef5350"/>
<rect x="797.97" y="176.6" width="3.4" height="8.8" fill="#ef5350"/>
<rect x="804.38" y="185.4" width="3.4" height="18.8" fill="#ef5350"/>
<rect x="810.78" y="204.2" width="3.4" height="15.1" fill="#ef5350"/>
<rect x="817.19" y="209.3" width="3.4" height="8.7" fill="#26a69a"/>
<rect x="823.60" y="210.5" width="3.4" height="10.1" fill="#ef5350"/>
<rect x="830.00" y="219.3" width="3.4" height="10.0" fill="#ef5350"/>
<rect x="836.41" y="218.0" width="3.4" height="11.3" fill="#26a69a"/>
<rect x="842.82" y="218.8" width="3.4" height="1.6" fill="#ef5350"/>
<rect x="849.22" y="220.6" width="3.4" height="37.6" fill="#ef5350"/>
<rect x="855.63" y="257.0" width="3.4" height="1.7" fill="#ef5350"/>
<rect x="862.04" y="244.4" width="3.4" height="15.1" fill="#26a69a"/>
<rect x="868.45" y="239.4" width="3.4" height="6.3" fill="#26a69a"/>
<rect x="874.85" y="240.6" width="3.4" height="12.6" fill="#ef5350"/>
<rect x="881.26" y="255.7" width="3.4" height="3.8" fill="#26a69a"/>
<rect x="887.67" y="255.7" width="3.4" height="54.8" fill="#ef5350"/>
<rect x="894.07" y="310.2" width="3.4" height="15.0" fill="#ef5350"/>
<rect x="900.48" y="305.1" width="3.4" height="9.4" fill="#26a69a"/>
<rect x="906.89" y="293.8" width="3.4" height="12.6" fill="#26a69a"/>
<rect x="913.29" y="285.0" width="3.4" height="10.1" fill="#26a69a"/>
<rect x="919.70" y="285.0" width="3.4" height="44.6" fill="#ef5350"/>
<rect x="926.11" y="327.7" width="3.4" height="1.6" fill="#26a69a"/>
<rect x="932.51" y="327.7" width="3.4" height="33.9" fill="#ef5350"/>
<rect x="938.92" y="346.5" width="3.4" height="15.1" fill="#26a69a"/>
<rect x="945.33" y="347.8" width="3.4" height="5.0" fill="#ef5350"/>
<rect x="951.74" y="352.5" width="3.4" height="29.5" fill="#ef5350"/>
<rect x="958.14" y="381.6" width="3.4" height="42.7" fill="#ef5350"/>
<rect x="964.55" y="423.0" width="3.4" height="44.0" fill="#ef5350"/>
<rect x="970.96" y="467.0" width="3.4" height="23.8" fill="#ef5350"/>
<rect x="977.36" y="482.0" width="3.4" height="7.6" fill="#26a69a"/>
<rect x="983.77" y="468.2" width="3.4" height="13.8" fill="#26a69a"/>
<rect x="990.18" y="468.2" width="3.4" height="11.3" fill="#ef5350"/>
<rect x="996.59" y="478.3" width="3.4" height="7.5" fill="#ef5350"/>
<rect x="1002.99" y="485.8" width="3.4" height="10.0" fill="#ef5350"/>
<rect x="1009.40" y="484.5" width="3.4" height="12.6" fill="#26a69a"/>
<rect x="1015.81" y="477.0" width="3.4" height="8.8" fill="#26a69a"/>
<rect x="1022.21" y="472.0" width="3.4" height="3.7" fill="#26a69a"/>
<rect x="1028.62" y="425.5" width="3.4" height="47.7" fill="#26a69a"/>
<rect x="1035.03" y="425.5" width="3.4" height="72.8" fill="#ef5350"/>
<rect x="1041.43" y="492.1" width="3.4" height="6.2" fill="#26a69a"/>
<rect x="1047.84" y="492.1" width="3.4" height="12.5" fill="#ef5350"/>
<rect x="1054.25" y="502.1" width="3.4" height="23.9" fill="#ef5350"/>
<rect x="1060.65" y="509.6" width="3.4" height="15.1" fill="#26a69a"/>
<rect x="1067.06" y="453.2" width="3.4" height="58.9" fill="#26a69a"/>
<rect x="1073.47" y="451.9" width="3.4" height="12.6" fill="#ef5350"/>
<rect x="1079.88" y="465.7" width="3.4" height="2.5" fill="#ef5350"/>
<rect x="1086.28" y="469.5" width="3.4" height="12.5" fill="#ef5350"/>
<rect x="1092.69" y="460.7" width="3.4" height="12.5" fill="#ef5350"/>
<rect x="1099.10" y="470.7" width="3.4" height="1.6" fill="#26a69a"/>
<rect x="1105.50" y="460.7" width="3.4" height="11.3" fill="#26a69a"/>
<rect x="1111.91" y="460.7" width="3.4" height="33.9" fill="#ef5350"/>
<rect x="1118.32" y="499.6" width="3.4" height="51.8" fill="#ef5350"/>
<rect x="1124.72" y="551.4" width="3.4" height="50.2" fill="#ef5350"/>
<rect x="1131.13" y="606.6" width="3.4" height="15.1" fill="#ef5350"/>
<rect x="1137.54" y="617.9" width="3.4" height="2.5" fill="#26a69a"/>
<rect x="1143.95" y="620.4" width="3.4" height="11.3" fill="#ef5350"/>
<rect x="1150.35" y="631.7" width="3.4" height="87.9" fill="#ef5350"/>
<rect x="1156.76" y="719.6" width="3.4" height="45.4" fill="#ef5350"/>
<rect x="1163.17" y="619.2" width="3.4" height="147.4" fill="#26a69a"/>
<rect x="1169.57" y="630.5" width="3.4" height="20.1" fill="#ef5350"/>
<rect x="1175.98" y="650.6" width="3.4" height="12.5" fill="#ef5350"/>
<rect x="1182.39" y="661.9" width="3.4" height="6.2" fill="#ef5350"/>
<rect x="1188.80" y="629.2" width="3.4" height="38.9" fill="#26a69a"/>
<rect x="1195.20" y="570.2" width="3.4" height="59.0" fill="#26a69a"/>
<rect x="1201.61" y="543.9" width="3.4" height="27.6" fill="#26a69a"/>
<rect x="1208.02" y="520.0" width="3.4" height="22.6" fill="#26a69a"/>
<rect x="1214.42" y="514.7" width="3.4" height="45.5" fill="#ef5350"/>
<rect x="1220.83" y="558.9" width="3.4" height="76.6" fill="#ef5350"/>
<rect x="1227.24" y="635.5" width="3.4" height="52.7" fill="#ef5350"/>
<rect x="1233.64" y="633.0" width="3.4" height="54.0" fill="#26a69a"/>
<rect x="1240.05" y="631.2" width="3.4" height="1.6" fill="#26a69a"/>
<rect x="1246.46" y="629.2" width="3.4" height="22.6" fill="#ef5350"/>
<rect x="1252.87" y="651.8" width="3.4" height="22.6" fill="#ef5350"/>
<rect x="1259.27" y="674.4" width="3.4" height="66.1" fill="#ef5350"/>
<rect x="1265.68" y="740.2" width="3.4" height="17.6" fill="#ef5350"/>
<rect x="1272.09" y="756.5" width="3.4" height="20.1" fill="#ef5350"/>
<rect x="1278.49" y="766.6" width="3.4" height="8.8" fill="#26a69a"/>
<rect x="1284.90" y="781.6" width="3.4" height="23.9" fill="#26a69a"/>
<rect x="1291.31" y="780.9" width="3.4" height="1.6" fill="#26a69a"/>
<rect x="1297.71" y="781.6" width="3.4" height="54.0" fill="#ef5350"/>
<rect x="1304.12" y="834.4" width="3.4" height="15.0" fill="#ef5350"/>
<rect x="1310.53" y="840.6" width="3.4" height="8.8" fill="#26a69a"/>
<rect x="1316.93" y="826.8" width="3.4" height="13.8" fill="#26a69a"/>
<rect x="1323.34" y="826.8" width="3.4" height="15.1" fill="#ef5350"/>
<rect x="1329.75" y="833.1" width="3.4" height="7.5" fill="#26a69a"/>
<rect x="1336.16" y="766.6" width="3.4" height="66.5" fill="#26a69a"/>
<rect x="1342.56" y="767.8" width="3.4" height="158.2" fill="#ef5350"/>
<rect x="1348.97" y="757.8" width="3.4" height="168.2" fill="#26a69a"/>
<rect x="1355.38" y="759.0" width="3.4" height="13.9" fill="#ef5350"/>
<rect x="1361.78" y="772.9" width="3.4" height="6.2" fill="#ef5350"/>
<rect x="1368.19" y="779.1" width="3.4" height="27.6" fill="#ef5350"/>
<rect x="1374.60" y="780.4" width="3.4" height="26.3" fill="#26a69a"/>
<rect x="1381.01" y="756.5" width="3.4" height="23.9" fill="#26a69a"/>
<rect x="1387.41" y="718.9" width="3.4" height="37.6" fill="#26a69a"/>
<rect x="1393.82" y="720.1" width="3.4" height="11.3" fill="#ef5350"/>
<rect x="1400.23" y="731.4" width="3.4" height="15.1" fill="#ef5350"/>
<rect x="1406.63" y="746.5" width="3.4" height="5.0" fill="#ef5350"/>
<rect x="1413.04" y="721.4" width="3.4" height="31.4" fill="#26a69a"/>
<rect x="1419.45" y="713.5" width="3.4" height="7.5" fill="#26a69a"/>
<rect x="1425.85" y="713.5" width="3.4" height="52.1" fill="#ef5350"/>
<rect x="1432.26" y="766.3" width="3.4" height="10.0" fill="#ef5350"/>
<rect x="1438.67" y="762.5" width="3.4" height="13.8" fill="#26a69a"/>
<rect x="1445.08" y="750.6" width="3.4" height="11.9" fill="#26a69a"/>
<rect x="1451.48" y="745.5" width="3.4" height="6.3" fill="#26a69a"/>
<rect x="1457.89" y="693.2" width="3.4" height="53.9" fill="#26a69a"/>
<rect x="1464.30" y="681.9" width="3.4" height="10.0" fill="#26a69a"/>
<rect x="1470.70" y="668.0" width="3.4" height="15.1" fill="#26a69a"/>
<rect x="1477.11" y="690.6" width="3.4" height="10.1" fill="#ef5350"/>
<rect x="1483.52" y="683.1" width="3.4" height="17.6" fill="#26a69a"/>
<rect x="1489.92" y="681.9" width="3.4" height="20.0" fill="#ef5350"/>
<rect x="1496.33" y="691.9" width="3.4" height="10.0" fill="#26a69a"/>
<rect x="1502.74" y="665.5" width="3.4" height="26.4" fill="#26a69a"/>
<rect x="1509.14" y="665.5" width="3.4" height="1.6" fill="#ef5350"/>
<rect x="1515.55" y="666.8" width="3.4" height="5.0" fill="#ef5350"/>
<rect x="1521.96" y="669.3" width="3.4" height="2.5" fill="#26a69a"/>
<rect x="1528.37" y="668.0" width="3.4" height="28.9" fill="#ef5350"/>
<rect x="1534.77" y="696.9" width="3.4" height="22.6" fill="#ef5350"/>
<rect x="1541.18" y="719.5" width="3.4" height="35.2" fill="#ef5350"/>
<rect x="1547.59" y="744.6" width="3.4" height="10.1" fill="#26a69a"/>
<rect x="1553.99" y="745.9" width="3.4" height="2.5" fill="#ef5350"/>
<rect x="1560.40" y="748.4" width="3.4" height="10.0" fill="#ef5350"/>
<rect x="1566.81" y="750.9" width="3.4" height="7.5" fill="#26a69a"/>
<rect x="1573.21" y="709.5" width="3.4" height="41.4" fill="#26a69a"/>
<rect x="1579.62" y="709.5" width="3.4" height="33.9" fill="#ef5350"/>
<rect x="1586.03" y="744.6" width="3.4" height="25.1" fill="#ef5350"/>
<rect x="1592.44" y="769.7" width="3.4" height="11.3" fill="#ef5350"/>
<rect x="1598.84" y="782.3" width="3.4" height="10.7" fill="#ef5350"/>
<rect x="1605.25" y="733.3" width="3.4" height="58.4" fill="#26a69a"/>
<rect x="1611.66" y="685.6" width="3.4" height="47.7" fill="#26a69a"/>
<rect x="1618.06" y="686.4" width="3.4" height="1.6" fill="#ef5350"/>
<rect x="1624.47" y="686.9" width="3.4" height="7.5" fill="#ef5350"/>
<rect x="1630.88" y="666.8" width="3.4" height="26.4" fill="#26a69a"/>
<rect x="1637.29" y="654.2" width="3.4" height="12.6" fill="#26a69a"/>
<rect x="1643.69" y="653.0" width="3.4" height="51.5" fill="#ef5350"/>
<rect x="1650.10" y="699.4" width="3.4" height="5.1" fill="#26a69a"/>
<rect x="1656.51" y="689.4" width="3.4" height="11.3" fill="#26a69a"/>
<rect x="1662.91" y="689.9" width="3.4" height="1.6" fill="#ef5350"/>
<rect x="1669.32" y="675.6" width="3.4" height="2.0" fill="#26a69a"/>
<rect x="1675.73" y="676.8" width="3.4" height="6.3" fill="#ef5350"/>
<rect x="1682.13" y="683.1" width="3.4" height="17.6" fill="#ef5350"/>
<rect x="1688.54" y="641.7" width="3.4" height="59.0" fill="#26a69a"/>
<rect x="1694.95" y="641.7" width="3.4" height="11.3" fill="#ef5350"/>
<rect x="1701.36" y="651.7" width="3.4" height="13.8" fill="#ef5350"/>
<rect x="1707.76" y="656.7" width="3.4" height="8.8" fill="#26a69a"/>
<rect x="1714.17" y="658.0" width="3.4" height="2.5" fill="#ef5350"/>
<rect x="1720.58" y="645.4" width="3.4" height="15.1" fill="#26a69a"/>
<rect x="1726.98" y="645.4" width="3.4" height="30.2" fill="#ef5350"/>
<rect x="1733.39" y="648.0" width="3.4" height="27.6" fill="#26a69a"/>
<rect x="1739.80" y="620.3" width="3.4" height="27.7" fill="#26a69a"/>
<rect x="1746.20" y="611.6" width="3.4" height="8.7" fill="#26a69a"/>
<rect x="1752.61" y="587.7" width="3.4" height="23.9" fill="#26a69a"/>
<rect x="1759.02" y="572.6" width="3.4" height="15.1" fill="#26a69a"/>
<rect x="1765.42" y="571.4" width="3.4" height="10.0" fill="#ef5350"/>
<rect x="1771.83" y="582.7" width="3.4" height="17.6" fill="#ef5350"/>
<rect x="1778.24" y="600.3" width="3.4" height="27.6" fill="#ef5350"/>
<rect x="1784.65" y="612.8" width="3.4" height="15.1" fill="#26a69a"/>
<rect x="1791.05" y="602.8" width="3.4" height="10.0" fill="#26a69a"/>
<rect x="1797.46" y="602.8" width="3.4" height="11.3" fill="#ef5350"/>
<rect x="1803.87" y="614.1" width="3.4" height="40.1" fill="#ef5350"/>
<rect x="1810.27" y="653.0" width="3.4" height="17.6" fill="#ef5350"/>
<rect x="1816.68" y="670.6" width="3.4" height="6.2" fill="#ef5350"/>
<rect x="1823.09" y="665.5" width="3.4" height="11.3" fill="#26a69a"/>
<rect x="1829.50" y="666.8" width="3.4" height="16.3" fill="#ef5350"/>
<rect x="1835.90" y="675.6" width="3.4" height="6.3" fill="#26a69a"/>
<rect x="1842.31" y="674.3" width="3.4" height="22.6" fill="#ef5350"/>
<rect x="1848.72" y="676.8" width="3.4" height="18.9" fill="#26a69a"/>
<rect x="1855.12" y="676.8" width="3.4" height="26.4" fill="#ef5350"/>
<path d="M5.4 297.7 C6.7 297.4 16.0 295.9 18.2 295.2 C20.4 294.5 26.4 291.2 27.6 290.8 C28.9 290.4 28.4 289.7 30.7 290.8 C33.0 291.9 45.7 298.7 50.2 301.4 C54.7 304.1 71.5 316.5 75.3 317.8 C79.1 319.1 84.7 314.8 87.8 314.0 C90.9 313.2 104.0 310.5 106.6 309.6 C109.2 308.7 111.7 305.2 114.2 304.6 C116.7 304.0 128.5 303.0 131.7 303.7 C134.9 304.4 144.0 309.1 146.0 311.9 C148.0 314.7 150.8 328.6 152.0 331.8 C153.2 335.0 156.8 341.5 158.1 343.9 C159.4 346.3 163.9 354.0 165.3 355.9 C166.7 357.8 170.9 362.4 172.5 363.1 C174.1 363.8 179.2 362.9 181.0 362.9 C182.8 362.9 188.9 363.3 190.6 363.4 C192.3 363.5 196.5 364.0 197.8 364.3 C199.1 364.6 202.2 365.4 203.9 366.1 C205.6 366.8 212.2 370.4 214.7 371.6 C217.2 372.8 226.7 377.5 229.2 378.2 C231.7 378.9 237.8 378.5 240.0 378.2 C242.2 377.9 248.6 375.7 250.8 375.2 C253.0 374.7 259.8 374.0 261.7 373.4 C263.6 372.8 268.7 369.9 270.1 369.2 C271.5 368.5 275.0 367.0 276.1 366.1 C277.2 365.2 279.9 360.8 281.0 360.7 C282.1 360.6 285.7 364.4 287.0 364.9 C288.3 365.4 292.9 366.1 294.2 366.1 C295.5 366.1 298.9 365.2 300.0 365.1 C301.1 365.0 303.8 364.6 305.0 365.4 C306.2 366.2 311.1 371.6 312.5 372.7 C313.9 373.8 317.5 375.3 318.8 376.4 C320.1 377.5 323.8 380.5 325.1 384.0 C326.4 387.5 330.1 407.1 331.4 411.6 C332.6 416.1 336.4 426.9 337.6 429.1 C338.9 431.3 342.6 432.2 343.9 433.5 C345.2 434.8 349.5 441.2 350.8 441.7 C352.1 442.2 355.9 440.9 357.1 438.5 C358.3 436.1 361.4 421.2 362.7 417.8 C364.0 414.4 368.9 406.6 370.3 404.0 C371.7 401.4 375.2 394.3 376.5 392.1 C377.8 389.9 381.5 384.2 382.8 382.1 C384.1 380.0 387.7 373.7 389.1 371.4 C390.5 369.1 394.7 362.3 396.6 359.5 C398.5 356.7 405.6 346.3 407.9 343.8 C410.2 341.3 417.2 335.7 419.2 334.4 C421.2 333.1 425.6 330.6 427.6 330.7 C429.6 330.8 436.8 334.3 439.4 335.1 C442.0 335.9 451.3 338.8 453.5 338.9 C455.7 339.0 458.9 338.0 461.0 336.1 C463.1 334.2 471.2 323.3 474.0 320.0 C476.8 316.7 486.6 305.3 489.1 302.7 C491.6 300.1 496.9 296.6 498.8 294.0 C500.7 291.4 506.7 280.9 508.5 276.8 C510.3 272.7 514.9 256.7 517.1 253.0 C519.3 249.3 527.5 241.9 530.1 240.1 C532.7 238.3 541.1 235.9 543.0 234.7 C544.9 233.5 548.0 229.9 549.5 228.5 C551.0 227.1 555.5 222.6 558.1 220.7 C560.7 218.8 572.8 212.1 575.4 209.9 C578.0 207.7 581.8 202.4 584.0 199.1 C586.2 195.8 594.8 179.9 597.0 176.4 C599.2 172.9 603.9 165.9 605.6 164.5 C607.3 163.1 612.1 163.7 614.3 162.4 C616.5 161.1 624.2 153.7 627.2 151.6 C630.2 149.5 641.9 141.6 644.5 141.9 C647.1 142.2 651.8 153.3 653.1 154.8 C654.4 156.3 655.7 155.9 657.2 157.1 C658.7 158.3 665.8 165.9 668.1 167.0 C670.5 168.1 678.5 167.3 680.7 167.9 C682.9 168.5 687.4 170.2 689.8 172.5 C692.1 174.8 701.7 188.9 704.2 191.4 C706.7 193.9 712.6 196.5 715.1 197.8 C717.6 199.1 726.6 203.1 729.5 204.1 C732.4 205.1 741.1 207.2 744.0 207.7 C746.9 208.1 755.3 208.5 758.4 208.6 C761.5 208.7 772.2 209.2 774.7 208.6 C777.2 208.0 781.7 203.7 783.7 202.3 C785.7 201.0 792.6 196.1 794.6 195.1 C796.6 194.1 801.8 192.5 803.6 192.3 C805.4 192.1 810.8 192.6 812.6 193.2 C814.4 193.8 819.9 197.5 821.7 198.3 C823.5 199.1 828.9 200.6 830.7 201.4 C832.5 202.2 837.7 205.9 839.7 206.8 C841.7 207.7 848.2 208.7 850.6 210.4 C853.0 212.1 860.5 221.9 863.2 224.0 C865.9 226.1 875.0 229.8 877.7 231.2 C880.4 232.6 887.8 235.3 890.3 238.4 C892.8 241.5 899.9 258.3 903.0 261.9 C906.1 265.5 917.3 270.7 921.0 274.6 C924.7 278.5 936.9 297.3 940.0 301.3 C943.1 305.3 950.5 312.8 952.5 315.0 C954.5 317.2 958.6 321.5 960.0 323.8 C961.4 326.1 965.3 335.0 966.3 337.6 C967.3 340.2 969.2 347.3 970.1 350.2 C971.0 353.1 974.1 363.5 975.1 366.5 C976.1 369.5 979.2 377.7 980.2 380.3 C981.2 382.9 984.0 390.2 985.2 392.8 C986.5 395.4 991.1 403.5 992.7 406.6 C994.3 409.7 999.6 420.4 1001.5 423.6 C1003.4 426.8 1009.7 436.2 1012.0 438.9 C1014.3 441.6 1021.7 449.8 1024.1 451.0 C1026.5 452.2 1033.7 449.9 1036.1 451.0 C1038.5 452.1 1046.0 459.8 1048.2 461.8 C1050.4 463.8 1055.8 469.5 1057.8 471.4 C1059.8 473.3 1066.5 480.7 1068.7 481.1 C1070.9 481.5 1077.5 476.1 1079.5 475.5 C1081.5 474.9 1086.5 474.7 1089.2 474.6 C1091.9 474.5 1103.3 474.7 1106.0 474.6 C1108.7 474.5 1114.0 473.4 1115.7 473.9 C1117.4 474.4 1121.0 476.6 1122.9 479.9 C1124.8 483.1 1132.2 499.9 1134.9 506.4 C1137.6 512.9 1147.2 538.9 1149.4 544.9 C1151.6 550.9 1155.0 560.5 1156.6 566.6 C1158.2 572.8 1163.4 601.9 1165.1 606.4 C1166.8 610.9 1171.0 609.0 1173.5 611.2 C1176.0 613.4 1188.0 626.4 1190.4 628.1 C1192.8 629.8 1195.7 629.9 1197.6 628.1 C1199.5 626.3 1207.2 613.9 1209.6 610.0 C1212.0 606.1 1219.5 590.2 1221.7 589.5 C1223.9 588.8 1229.5 600.5 1231.3 602.8 C1233.1 605.1 1238.5 611.0 1240.0 612.4 C1241.5 613.8 1244.7 615.4 1246.2 616.6 C1247.7 617.8 1253.8 622.9 1255.4 624.6 C1257.0 626.3 1260.7 630.7 1262.3 633.9 C1263.9 637.1 1269.8 652.1 1271.6 657.0 C1273.4 661.9 1279.0 678.0 1280.8 682.4 C1282.6 686.8 1288.2 697.2 1290.0 700.9 C1291.8 704.6 1297.5 715.1 1299.3 719.3 C1301.1 723.4 1306.7 737.8 1308.5 742.4 C1310.3 747.0 1316.0 761.8 1317.8 765.5 C1319.6 769.2 1325.0 776.7 1327.0 779.4 C1329.0 782.1 1335.8 791.0 1337.4 792.1 C1339.0 793.2 1341.9 789.3 1343.2 790.9 C1344.5 792.5 1348.5 807.3 1350.1 808.2 C1351.7 809.1 1357.5 801.5 1359.3 800.2 C1361.1 798.9 1366.8 796.0 1368.6 795.5 C1370.4 795.0 1375.7 796.3 1377.8 795.5 C1379.9 794.7 1387.2 789.7 1389.4 787.5 C1391.6 785.3 1398.2 775.5 1400.0 773.5 C1401.8 771.5 1406.0 768.7 1407.5 767.8 C1409.0 766.9 1413.1 765.7 1415.1 764.1 C1417.1 762.5 1425.0 752.7 1427.6 752.1 C1430.2 751.5 1438.9 757.3 1441.4 757.8 C1443.9 758.3 1450.9 757.5 1452.7 757.2 C1454.5 757.0 1457.6 756.5 1459.0 755.3 C1460.4 754.1 1464.6 748.1 1466.5 745.2 C1468.4 742.3 1475.4 729.3 1477.8 726.4 C1480.2 723.5 1488.3 717.7 1490.3 716.4 C1492.3 715.1 1496.5 713.9 1497.9 713.2 C1499.3 712.5 1502.1 711.1 1504.1 709.5 C1506.1 707.9 1515.3 698.8 1517.9 696.9 C1520.5 695.0 1528.6 691.2 1530.5 690.7 C1532.4 690.2 1535.5 691.4 1536.8 691.9 C1538.0 692.4 1541.6 694.4 1543.0 695.7 C1544.4 697.0 1548.6 702.9 1550.6 705.1 C1552.6 707.3 1560.7 715.4 1563.1 717.6 C1565.5 719.8 1572.6 726.3 1574.4 727.1 C1576.2 727.9 1579.4 725.7 1580.7 725.8 C1582.0 725.9 1585.6 726.6 1587.0 727.7 C1588.4 728.8 1592.5 734.4 1594.5 736.5 C1596.5 738.6 1605.1 748.0 1607.0 749.0 C1608.9 750.0 1611.7 747.9 1613.3 746.5 C1614.9 745.1 1621.4 737.3 1623.3 735.2 C1625.2 733.1 1630.4 728.0 1632.1 725.8 C1633.8 723.6 1638.5 715.2 1639.9 713.2 C1641.3 711.2 1644.1 706.3 1645.7 705.5 C1647.3 704.7 1654.1 705.2 1656.1 704.9 C1658.0 704.6 1663.2 703.5 1665.2 702.9 C1667.2 702.2 1673.9 699.2 1675.7 698.4 C1677.5 697.6 1682.1 695.5 1683.5 695.1 C1684.9 694.7 1688.8 695.2 1690.1 694.4 C1691.4 693.5 1695.0 688.0 1696.6 686.6 C1698.2 685.2 1703.9 681.7 1705.7 680.7 C1707.5 679.7 1712.8 677.2 1714.9 676.2 C1717.0 675.2 1724.6 671.6 1726.6 670.9 C1728.5 670.2 1732.8 670.1 1734.4 669.6 C1736.0 669.1 1740.3 667.3 1742.3 665.7 C1744.3 664.1 1751.8 656.6 1754.0 654.0 C1756.2 651.4 1762.5 642.5 1764.5 639.6 C1766.5 636.7 1772.0 627.0 1773.6 625.2 C1775.2 623.4 1778.8 621.7 1780.1 621.3 C1781.4 620.9 1785.3 621.5 1786.7 621.3 C1788.1 621.1 1792.8 619.9 1794.5 619.4 C1796.2 618.9 1802.3 616.9 1803.6 616.8 C1804.9 616.7 1806.2 616.7 1807.5 618.1 C1808.8 619.5 1814.9 628.4 1816.7 630.5 C1818.5 632.6 1823.8 637.3 1825.8 639.0 C1827.8 640.7 1834.3 645.9 1836.3 647.4 C1838.3 648.9 1843.4 652.6 1845.4 654.0 C1847.4 655.4 1855.4 661.0 1856.5 661.8" fill="none" stroke="#cc1820" stroke-width="1.7" stroke-linejoin="round" stroke-linecap="round"/>
<line x1="4.6" y1="56" x2="4.6" y2="954.5" stroke="#333" stroke-width="1.2"/>
<line x1="4" y1="56.5" x2="1870" y2="56.5" stroke="#777" stroke-width="1"/>
<line x1="4" y1="954.3" x2="1871" y2="954.3" stroke="#333" stroke-width="1.3"/>
<line x1="1870.5" y1="56" x2="1870.5" y2="954.5" stroke="#333" stroke-width="1.3"/>
</svg>
<div class="pl" style="top:76.8px">0.64035</div>
<div class="ptick" style="top:82.3px"></div>
<div class="pl" style="top:117.5px">0.63870</div>
<div class="ptick" style="top:123.0px"></div>
<div class="pl" style="top:158.3px">0.63700</div>
<div class="ptick" style="top:163.8px"></div>
<div class="pl" style="top:199.0px">0.63535</div>
<div class="ptick" style="top:204.5px"></div>
<div class="pl" style="top:239.7px">0.63365</div>
<div class="ptick" style="top:245.2px"></div>
<div class="pl" style="top:280.4px">0.63195</div>
<div class="ptick" style="top:285.9px"></div>
<div class="pl" style="top:321.2px">0.63030</div>
<div class="ptick" style="top:326.7px"></div>
<div class="pl" style="top:361.9px">0.62860</div>
<div class="ptick" style="top:367.4px"></div>
<div class="pl" style="top:402.6px">0.62690</div>
<div class="ptick" style="top:408.1px"></div>
<div class="pl" style="top:443.4px">0.62525</div>
<div class="ptick" style="top:448.9px"></div>
<div class="pl" style="top:484.1px">0.62355</div>
<div class="ptick" style="top:489.6px"></div>
<div class="pl" style="top:524.8px">0.62185</div>
<div class="ptick" style="top:530.3px"></div>
<div class="pl" style="top:565.6px">0.62020</div>
<div class="ptick" style="top:571.1px"></div>
<div class="pl" style="top:606.3px">0.61850</div>
<div class="ptick" style="top:611.8px"></div>
<div class="pl" style="top:647.0px">0.61685</div>
<div class="ptick" style="top:652.5px"></div>
<div class="pl" style="top:687.7px">0.61515</div>
<div class="ptick" style="top:693.2px"></div>
<div class="pl" style="top:728.5px">0.61345</div>
<div class="ptick" style="top:734.0px"></div>
<div class="pl" style="top:769.2px">0.61180</div>
<div class="ptick" style="top:774.7px"></div>
<div class="pl" style="top:809.9px">0.61010</div>
<div class="ptick" style="top:815.4px"></div>
<div class="pl" style="top:850.7px">0.60840</div>
<div class="ptick" style="top:856.2px"></div>
<div class="pl" style="top:891.4px">0.60675</div>
<div class="ptick" style="top:896.9px"></div>
<div class="pl" style="top:932.1px">0.60505</div>
<div class="ptick" style="top:937.6px"></div>
<div class="tl" style="left:4.7px">21 Jan 2025</div>
<div class="ttick" style="left:4.7px"></div>
<div class="tl" style="left:81.6px">23 Jan 16:00</div>
<div class="ttick" style="left:81.6px"></div>
<div class="tl" style="left:158.5px">27 Jan 16:00</div>
<div class="ttick" style="left:158.5px"></div>
<div class="tl" style="left:235.4px">29 Jan 16:00</div>
<div class="ttick" style="left:235.4px"></div>
<div class="tl" style="left:312.2px">31 Jan 16:00</div>
<div class="ttick" style="left:312.2px"></div>
<div class="tl" style="left:389.1px">4 Feb 16:00</div>
<div class="ttick" style="left:389.1px"></div>
<div class="tl" style="left:466.0px">6 Feb 16:00</div>
<div class="ttick" style="left:466.0px"></div>
<div class="tl" style="left:542.9px">10 Feb 16:00</div>
<div class="ttick" style="left:542.9px"></div>
<div class="tl" style="left:619.8px">12 Feb 16:00</div>
<div class="ttick" style="left:619.8px"></div>
<div class="tl" style="left:696.7px">14 Feb 16:00</div>
<div class="ttick" style="left:696.7px"></div>
<div class="tl" style="left:773.5px">18 Feb 16:00</div>
<div class="ttick" style="left:773.5px"></div>
<div class="tl" style="left:850.4px">20 Feb 16:00</div>
<div class="ttick" style="left:850.4px"></div>
<div class="tl" style="left:927.3px">24 Feb 16:00</div>
<div class="ttick" style="left:927.3px"></div>
<div class="tl" style="left:1004.2px">26 Feb 16:00</div>
<div class="ttick" style="left:1004.2px"></div>
<div class="tl" style="left:1081.1px">28 Feb 16:00</div>
<div class="ttick" style="left:1081.1px"></div>
<div class="tl" style="left:1158.0px">4 Mar 16:00</div>
<div class="ttick" style="left:1158.0px"></div>
<div class="tl" style="left:1234.8px">6 Mar 16:00</div>
<div class="ttick" style="left:1234.8px"></div>
<div class="tl" style="left:1311.7px">10 Mar 16:00</div>
<div class="ttick" style="left:1311.7px"></div>
<div class="tl" style="left:1388.6px">12 Mar 16:00</div>
<div class="ttick" style="left:1388.6px"></div>
<div class="tl" style="left:1465.5px">14 Mar 16:00</div>
<div class="ttick" style="left:1465.5px"></div>
<div class="tl" style="left:1542.4px">18 Mar 16:00</div>
<div class="ttick" style="left:1542.4px"></div>
<div class="tl" style="left:1619.3px">20 Mar 16:00</div>
<div class="ttick" style="left:1619.3px"></div>
<div class="tl" style="left:1696.1px">24 Mar 16:00</div>
<div class="ttick" style="left:1696.1px"></div>
<div class="tl" style="left:1773.0px">26 Mar 16:00</div>
<div class="ttick" style="left:1773.0px"></div>
<div class="tl" style="left:1849.9px">28 Mar 16:00</div>
<div class="ttick" style="left:1849.9px"></div>
<div class="abs" style="left:1872px;top:696.5px;width:45px;height:11.5px;background:#000"></div>
<div class="pl" style="top:696px;color:#fff;-webkit-text-stroke:0.2px #fff">0.61478</div>
<div class="abs" style="left:19.5px;top:59px;font-size:10px;color:#222;white-space:nowrap;transform:scaleX(0.86);transform-origin:left">CADCHF,H4</div>
<div class="abs" style="left:76.2px;top:59px;font-size:10px;color:#222;white-space:nowrap">0.61581</div>
<div class="abs" style="left:116.5px;top:59px;font-size:10px;color:#222;white-space:nowrap">0.61590</div>
<div class="abs" style="left:156.5px;top:59px;font-size:10px;color:#222;white-space:nowrap">0.61471</div>
<div class="abs" style="left:196.5px;top:59px;font-size:10px;color:#222;white-space:nowrap">0.61478</div>
<svg class="abs" style="left:7px;top:62px" width="8" height="5"><path d="M0 0 L7 0 L3.5 4.5Z" fill="#111"/></svg>

<!-- bottom tabs -->
<div class="abs" style="left:0;top:975px;width:1920px;height:1.5px;background:#5a5a5a"></div>
<div class="tab" style="left:18px">AUDCAD,H4</div>
<div class="tsep" style="left:96.5px"></div>
<div class="tab" style="left:107.5px">CADCHF,H1</div>
<div class="tsep" style="left:183px"></div>
<div class="tab" style="left:194px">AUDUSD,M1</div>
<div class="tsep" style="left:272px"></div>
<div class="tab" style="left:283px">GBPJPY,H1</div>
<div class="tsep" style="left:349.5px"></div>
<div class="tab" style="left:360.5px">XAUUSD,H4</div>
<div class="tsep" style="left:436px"></div>
<div class="tab" style="left:446px">CADCHF,M30</div>
<div class="abs" style="left:529px;top:975px;width:86px;height:20px;background:#fff;border:1.5px solid #333;border-top:none"></div>
<div class="tab" style="left:539.5px;color:#222">CADCHF,H4</div>
<div class="tab" style="left:626px">AUDNZD,H1</div>
<div class="tsep" style="left:705.5px"></div>
<svg class="abs" style="left:1885px;top:978px" width="35" height="14"><path d="M9 2.5L5.5 6.5L9 10.5M24.5 2.5L28 6.5L24.5 10.5" stroke="#a8a8a8" stroke-width="1.6" fill="none"/></svg>

<!-- dialog -->
<div id="dlg">
  <div id="dlgtitle"></div>
  <div class="abs" style="left:640.5px;top:0;width:1px;height:31px;background:#8a8a8a"></div>
  <svg class="abs" style="left:635px;top:297px" width="6" height="5"><rect x="0" y="0" width="2" height="1.5" fill="#aaa"/><rect x="3" y="0" width="2" height="1.5" fill="#aaa"/><rect x="0" y="2.5" width="2" height="1.5" fill="#aaa"/><rect x="3" y="2.5" width="2" height="1.5" fill="#aaa"/></svg>
  <div class="abs" style="left:9px;top:6.5px;font-size:12.8px;color:#111;white-space:nowrap;transform:scaleX(0.922);transform-origin:left">Custom Indicator - McGinley Dynamic MT4 by TFLab</div>
  <div class="abs" style="left:568px;top:7px;font-size:13px;color:#111">?</div>
  <svg class="abs" style="left:612px;top:9px" width="12" height="12"><path d="M1 1L11 11M11 1L1 11" stroke="#111" stroke-width="1.2"/></svg>
  <!-- tabs -->
  <div class="abs" style="left:10px;top:39px;width:36px;height:18px;background:#ececec;border:1px solid #e0e0e0"></div>
  <div class="abs" style="left:46px;top:39px;width:52px;height:18px;background:#ececec;border:1px solid #e0e0e0"></div>
  <div class="abs" style="left:98px;top:38px;width:41px;height:20px;background:#fff;border:1px solid #e0e0e0;border-bottom:none"></div>
  <div class="abs" style="left:139px;top:39px;width:40px;height:18px;background:#ececec;border:1px solid #e0e0e0"></div>
  <div class="abs" style="left:179px;top:39px;width:69px;height:18px;background:#ececec;border:1px solid #e0e0e0"></div>
  <div class="dtab" style="left:13px;top:41px">About</div>
  <div class="dtab" style="left:51px;top:41px">Common</div>
  <div class="dtab" style="left:104px;top:39px">Inputs</div>
  <div class="dtab" style="left:143px;top:41px">Colors</div>
  <div class="dtab" style="left:184px;top:41px">Visualization</div>
  <!-- panel -->
  <div class="abs" style="left:7px;top:57px;width:629px;height:209px;background:#fff;border:1px solid #e3e3e3"></div>
  <div class="abs" style="left:15.5px;top:64px;width:493px;height:194.5px;background:#fff;border:1px solid #8c8c8c">
    <div class="vt" style="left:6px;top:5px">Variable</div>
    <div class="vt" style="left:249px;top:5px">Value</div>
    <div class="abs" style="left:244.5px;top:0;width:1px;height:102px;background:#eaeaea"></div>
    <div class="row" style="top:20.5px;background:#fff;border-bottom:1px solid #d6d6d6"></div>
    <div class="row" style="top:41px;background:#e9e9e9;border-bottom:1px solid #d6d6d6"></div>
    <div class="row" style="top:61.5px;background:#fff;border-bottom:1px solid #d6d6d6"></div>
    <div class="row" style="top:82px;background:#e9e9e9;border-bottom:1px solid #d6d6d6"></div>
    <div class="abs" style="left:244.5px;top:20px;width:1px;height:82px;background:#d6d6d6"></div>
    <div class="vt" style="left:22px;top:25px">Note</div>
    <div class="vt" style="left:22px;top:45.5px">NumberOfBars</div>
    <div class="vt" style="left:22px;top:66px">Periods</div>
    <div class="vt" style="left:22px;top:86.5px">Smoothing</div>
    <div class="vt" style="left:248px;top:25px;font-size:11px;letter-spacing:-0.2px">NumberOfBars = 0 means all bars</div>
    <div class="vt" style="left:248px;top:45.5px">1000</div>
    <div class="vt" style="left:248px;top:66px">12</div>
    <div class="vt" style="left:248px;top:86.5px">125</div>
    <svg class="abs" style="left:2px;top:22px" width="18" height="80"><path d="M1 2.5Q1 1 2.5 1H14.5Q16 1 16 2.5V14Q13 13 8.5 14.5Q4 16 1 15Z" fill="#f4e57a" stroke="#d6c24a" stroke-width="0.8"/><text x="3" y="11" font-family="Liberation Sans" font-size="7.5" font-weight="bold" fill="#8a7a20">ab</text><path d="M1 23.0Q1 21.5 2.5 21.5H13L16 24.5V34.5Q13 33.5 8.5 35.0Q4 36.5 1 35.5Z" fill="#8cc4ec" stroke="#5a94c8" stroke-width="0.8"/><text x="2.2" y="31.5" font-family="Liberation Sans" font-size="6.5" font-weight="bold" fill="#1a3a8a">123</text><path d="M1 43.5Q1 42.0 2.5 42.0H13L16 45.0V55.0Q13 54.0 8.5 55.5Q4 57.0 1 56.0Z" fill="#8cc4ec" stroke="#5a94c8" stroke-width="0.8"/><text x="2.2" y="52.0" font-family="Liberation Sans" font-size="6.5" font-weight="bold" fill="#1a3a8a">123</text><path d="M1 64.0Q1 62.5 2.5 62.5H13L16 65.5V75.5Q13 74.5 8.5 76.0Q4 77.5 1 76.5Z" fill="#8cc4ec" stroke="#5a94c8" stroke-width="0.8"/><text x="2.2" y="72.5" font-family="Liberation Sans" font-size="6.5" font-weight="bold" fill="#1a3a8a">123</text></svg>
  </div>
  <div class="btn" style="left:517.3px;top:202.5px;width:111px;height:21.5px;line-height:19.5px">Load</div>
  <div class="btn" style="left:517.3px;top:235.5px;width:111px;height:21.5px;line-height:19.5px">Save</div>
  <div class="btn" style="left:381.8px;top:273.5px;width:79px;height:21.5px;line-height:17.5px;border:2px solid #1a75d2">OK</div>
  <div class="btn" style="left:468.3px;top:273.5px;width:79px;height:21.5px;line-height:19.5px">Cancel</div>
  <div class="btn" style="left:555.3px;top:273.5px;width:79px;height:21.5px;line-height:19.5px">Reset</div>
</div>

<svg class="abs" style="left:0;top:0" width="860" height="54"><path d="M3.8 2V22M3.8 28.5V51" stroke="#b0b0b0" stroke-width="1.5" stroke-dasharray="1 1.2"/><path d="M501 2V22M298.8 28.5V51" stroke="#b0b0b0" stroke-width="1.5" stroke-dasharray="1 1.2"/><path d="M84.5 1V23" stroke="#c4c4c4" stroke-width="1"/><path d="M85.5 1V23" stroke="#fafafa" stroke-width="1"/><path d="M226.7 1V23" stroke="#c4c4c4" stroke-width="1"/><path d="M227.7 1V23" stroke="#fafafa" stroke-width="1"/><path d="M496.5 1V23" stroke="#c4c4c4" stroke-width="1"/><path d="M497.5 1V23" stroke="#fafafa" stroke-width="1"/><path d="M587.5 1V23" stroke="#c4c4c4" stroke-width="1"/><path d="M588.5 1V23" stroke="#fafafa" stroke-width="1"/><path d="M673.7 1V23" stroke="#c4c4c4" stroke-width="1"/><path d="M674.7 1V23" stroke="#fafafa" stroke-width="1"/><path d="M733.3 1V23" stroke="#c4c4c4" stroke-width="1"/><path d="M734.3 1V23" stroke="#fafafa" stroke-width="1"/><path d="M62.8 28V51" stroke="#c4c4c4" stroke-width="1"/><path d="M63.8 28V51" stroke="#fafafa" stroke-width="1"/><path d="M294.2 28V51" stroke="#c4c4c4" stroke-width="1"/><path d="M295.2 28V51" stroke="#fafafa" stroke-width="1"/><rect x="533" y="1.5" width="24" height="22" fill="#f6f6f6" stroke="#dadada" stroke-width="1"/><rect x="678" y="1.5" width="27" height="22" fill="#f6f6f6" stroke="#dadada" stroke-width="1"/><rect x="7.5" y="27.5" width="24" height="24" fill="#f5f5f5"/><path d="M7.5 51.5V27.5H31.5" stroke="#cdcdcd" stroke-width="1" fill="none"/><rect x="11" y="4.5" width="12.5" height="10.5" rx="1.2" fill="#eaf2fb" stroke="#5f86b8" stroke-width="1.4"/><path d="M13.5 7V13M13 12.5H21" stroke="#7a8aa0" stroke-width="0.7"/><path d="M19.8 7.300000000000001H23.2V11.100000000000001H27.0V14.5H23.2V18.3H19.8V14.5H16.0V11.100000000000001H19.8Z" fill="#2ed12e" stroke="#179a17" stroke-width="0.8"/><path d="M32.2 10.5H38.2L35.2 13.5Z" fill="#111"/><rect x="48.5" y="4.5" width="13.5" height="10" rx="1.2" fill="#eaf2fb" stroke="#5f86b8" stroke-width="1.4"/><rect x="52" y="9.5" width="13" height="10.5" rx="1.2" fill="#eaf2fb" stroke="#5f86b8" stroke-width="1.4"/><path d="M51 7V12.5H59" stroke="#7a8aa0" stroke-width="0.7" fill="none"/><path d="M70 10.5H76L73 13.5Z" fill="#111"/><rect x="94" y="4.5" width="15" height="15.5" rx="1.2" fill="#f4f8fc" stroke="#5f86b8" stroke-width="1.4"/><path d="M98.5 7.5L101 10.5L98.5 13.5L96 10.5Z" fill="#2da52d"/><path d="M103 11.5L105.5 14.5L103 17.5L100.5 14.5Z" fill="#e56a4a"/><path d="M128.8 5.8Q134.2 7 135.6 12.2Q134.2 17.4 128.8 18.8Q123.4 17.4 122 12.2Q123.4 7 128.8 5.8Z" fill="none" stroke="#454545" stroke-width="1.4"/><path d="M128.8 9V15.4M125.6 12.2H132" stroke="#b0b0b0" stroke-width="0.8"/><circle cx="128.8" cy="5.9" r="1.4" fill="#333"/><circle cx="128.8" cy="18.7" r="1.4" fill="#333"/><circle cx="122" cy="12.2" r="1.4" fill="#333"/><circle cx="135.6" cy="12.2" r="1.4" fill="#333"/><path d="M146.5 4H151L152.5 6H157.5V16.5H146.5Z" fill="#f9e98a" stroke="#c8b24a" stroke-width="0.9"/><path d="M146.5 8H157.5" stroke="#e8cf5a" stroke-width="0.8"/><path d="M146.5 17.5V20" stroke="#999" stroke-width="1"/><path d="M161 10.5L162.5 13.8L166 14.2L163.4 16.5L164.2 20L161 18.2L157.8 20L158.6 16.5L156 14.2L159.5 13.8Z" fill="#f2d535" stroke="#b89a1e" stroke-width="0.8"/><rect x="175.5" y="4.5" width="15.5" height="14.5" rx="1.2" fill="#eef5fc" stroke="#5f86b8" stroke-width="1.4"/><rect x="176.2" y="5.2" width="4" height="13" fill="#4a78b0"/><path d="M182 9H189M182 12H189M182 15H189" stroke="#c8d4e4" stroke-width="0.8"/><rect x="202.5" y="4" width="12.5" height="14" fill="#f8f8f8" stroke="#8a8a8a" stroke-width="1"/><path d="M214 17L219 21.5" stroke="#c9a43c" stroke-width="2.4" stroke-linecap="round"/><circle cx="210.5" cy="13" r="4.3" fill="#e2f2f8" stroke="#6a8aa0" stroke-width="1.2"/><path d="M237.5 4H245L248 7V17.5H237.5Z" fill="#f6f6f6" stroke="#8c8c8c" stroke-width="1"/><path d="M239.5 10H243M239.5 12H242" stroke="#bbb" stroke-width="0.8"/><path d="M244.8 10.399999999999999H248.2V14.5H252.3V17.9H248.2V22.0H244.8V17.9H240.7V14.5H244.8Z" fill="#2ed12e" stroke="#179a17" stroke-width="0.8"/><path d="M325 11.5L332.5 4.5L339.5 12L332 19.5Z" fill="#e8c250" stroke="#a67c20" stroke-width="1.1"/><path d="M326.5 11.5L332.5 6L337.5 11L331 16Z" fill="#f5dc70"/><rect x="352.5" y="4" width="10" height="11" rx="2" fill="#3aa0dc" stroke="#2a6ca8" stroke-width="1"/><path d="M351.5 20H366.5C368.5 20 368.5 15.5 365.5 15.5C364.5 13 360.5 13 359.5 15C356 13.5 352.5 15 353 17C350.5 17.5 350 20 351.5 20Z" fill="#f0f0f8" stroke="#8a90a8" stroke-width="1.1"/><circle cx="386.5" cy="11.8" r="7.6" fill="none" stroke="#9a9a9a" stroke-width="1.3"/><circle cx="386.5" cy="11.8" r="4.6" fill="none" stroke="#8a8a8a" stroke-width="1.2"/><path d="M386.5 12V19.4A7.6 7.6 0 0 0 394 12Z" fill="#5aa05a" opacity="0.8"/><circle cx="386" cy="11.5" r="1.6" fill="#2a5a7a"/><path d="M404 9.5C406 5 412 3.5 418.5 6L420.5 9.5L414 14Z" fill="#5ab4e0" stroke="#3a80b0" stroke-width="0.8"/><path d="M404 9.5L414 14L420.5 9.5L417 19.5H409Z" fill="#f0d850" stroke="#c0a030" stroke-width="0.8"/><circle cx="417" cy="15.8" r="4.5" fill="#d42020" stroke="#a01010" stroke-width="0.8"/><circle cx="417" cy="15.8" r="1.7" fill="#fff"/><path d="M513.5 6V19.5M511.5 18H524" stroke="#444" stroke-width="1.3" fill="none"/><circle cx="513.5" cy="6" r="0.9" fill="#444"/><path d="M522.5 16.4L524.5 18L522.5 19.6Z" fill="#444"/><path d="M519.5 7.5V15M518 8H521M518 14.5H521" stroke="#2ea02e" stroke-width="1.5"/><path d="M540.5 6V19.5M538.5 18H551.5" stroke="#444" stroke-width="1.3" fill="none"/><circle cx="540.5" cy="6" r="0.9" fill="#444"/><path d="M550.0 16.4L552.0 18L550.0 19.6Z" fill="#444"/><path d="M546.8 3.5V16" stroke="#1e8a1e" stroke-width="1"/><rect x="544.2" y="5.5" width="5.2" height="9" rx="1.5" fill="#3ec43e" stroke="#1e8a1e" stroke-width="0.8"/><path d="M567.5 6V19.5M565.5 18H578.5" stroke="#444" stroke-width="1.3" fill="none"/><circle cx="567.5" cy="6" r="0.9" fill="#444"/><path d="M577.0 16.4L579.0 18L577.0 19.6Z" fill="#444"/><path d="M567.5 13L572 8.8L578 13" stroke="#444" stroke-width="1.3" fill="none"/><path d="M605.0 13.5L610.5 19.0" stroke="#caa63a" stroke-width="2.8" stroke-linecap="round"/><circle cx="601.5" cy="9.5" r="5" fill="#d8eefa" stroke="#4a6ea8" stroke-width="1.5"/><path d="M599.0 9.5H604.0" stroke="#3c78b8" stroke-width="1.8"/><path d="M601.5 7.0V12.0" stroke="#3c78b8" stroke-width="1.8"/><path d="M632.0 13.5L637.5 19.0" stroke="#caa63a" stroke-width="2.8" stroke-linecap="round"/><circle cx="628.5" cy="9.5" r="5" fill="#d8eefa" stroke="#4a6ea8" stroke-width="1.5"/><path d="M626.0 9.5H631.0" stroke="#3c78b8" stroke-width="1.8"/><rect x="650" y="3.5" width="8" height="8" fill="#3a9a3a"/><rect x="658" y="3.5" width="8" height="8" fill="#2a5ab0"/><rect x="650" y="11.5" width="8" height="8" fill="#2a5ab0"/><rect x="658" y="11.5" width="8" height="8" fill="#3a9a3a"/><rect x="651.5" y="6" width="5" height="3.5" fill="#d8f4c8"/><rect x="659.5" y="6" width="5" height="3.5" fill="#e8f0ff"/><rect x="651.5" y="14" width="5" height="3.5" fill="#e8f0ff"/><rect x="659.5" y="14" width="5" height="3.5" fill="#d8f4c8"/><path d="M686 6V19.5M684 18H697" stroke="#444" stroke-width="1.3" fill="none"/><circle cx="686" cy="6" r="0.9" fill="#444"/><path d="M695.5 16.4L697.5 18L695.5 19.6Z" fill="#444"/><path d="M690.5 8L695.5 11.3L690.5 14.5Z" fill="#2aaa4a"/><path d="M713.5 6V19.5M711.5 18H725" stroke="#444" stroke-width="1.3" fill="none"/><circle cx="713.5" cy="6" r="0.9" fill="#444"/><path d="M723.5 16.4L725.5 18L723.5 19.6Z" fill="#444"/><path d="M716.5 6V17" stroke="#6a9ad0" stroke-width="1.2"/><path d="M719 9L723.5 11.5L719 14Z" fill="#e05030"/><path d="M742.5 4H750L753 7V17H742.5Z" fill="#f4f4f4" stroke="#8a8a8a" stroke-width="1"/><path d="M746 8C744.5 9 744.5 13 746 14" stroke="#555" stroke-width="1" fill="none"/><path d="M750.3 10.5H753.7V14.3H757.5V17.7H753.7V21.5H750.3V17.7H746.5V14.3H750.3Z" fill="#2ed12e" stroke="#179a17" stroke-width="0.8"/><path d="M762 10.5H768L765 13.5Z" fill="#111"/><circle cx="787" cy="11.8" r="7" fill="#f4f8fc" stroke="#1c64a8" stroke-width="2.4"/><path d="M786 8.5V12H789.5" stroke="#444" stroke-width="1" fill="none"/><path d="M799.5 10.5H805.5L802.5 13.5Z" fill="#111"/><rect x="816.5" y="4.5" width="16" height="15" rx="1.2" fill="#f0f8ff" stroke="#4a78b0" stroke-width="1.4"/><rect x="817.2" y="5.2" width="14.6" height="2" fill="#4a78b0"/><path d="M819 12.5L822 11L825 12L829.5 10" stroke="#d04a60" stroke-width="1" fill="none"/><path d="M819 16.5L822 14.5L825 16L829.5 14" stroke="#3a9a60" stroke-width="1" fill="none"/><path d="M837.5 10.5H843.5L840.5 13.5Z" fill="#111"/><path d="M15.5 32.5V44.5L18.3 41.8L21 47.5L23 46.5L20.3 41H24Z" fill="#3c3c3c"/><path d="M47.2 32.5V38.5M47.2 42V48M39.5 40.2H45.5M49 40.2H55" stroke="#505050" stroke-width="1.4"/><path d="M79 33.5V47" stroke="#505050" stroke-width="1.5"/><path d="M100.5 40.4H113.5" stroke="#505050" stroke-width="1.5"/><path d="M128 47.5L140.5 34" stroke="#505050" stroke-width="1.3"/><path d="M153.5 42.5L164 32M155.5 46L166 35.5M154 38L158 42M157 35L161.5 39.5M160 32.5L164.5 37" stroke="#404040" stroke-width="1.2"/><path d="M168 43.5H165V48.5H168M165 46H167.5" stroke="#404040" stroke-width="1" fill="none"/><path d="M181 32.7H195M181 35.6H195M181 40H195M181 44.5H189" stroke="#555" stroke-width="0.9" stroke-dasharray="1.2 0.6"/><path d="M194.5 44H191.5V49.5M191.5 46.5H194" stroke="#404040" stroke-width="1.1" fill="none"/><path d="M211.5 45L215.5 36H216L220 45M213 42H218.5" stroke="#404040" stroke-width="1.8" fill="none"/><rect x="237.5" y="33.5" width="11.5" height="13.5" fill="none" stroke="#777" stroke-width="0.8" stroke-dasharray="1 1"/><path d="M239.8 36.8H246.8M243.3 36.8V44.5" stroke="#3c3c3c" stroke-width="1.6"/><circle cx="237.5" cy="33.8" r="0.9" fill="#333"/><path d="M266.5 33.5L269.8 36.5L266.5 39.5L263.2 36.5Z" fill="#3c3c3c"/><path d="M274.5 41L277.8 44L274.5 47L271.2 44Z" fill="#3c3c3c"/><path d="M265.8 40.5L268 42.5L271.5 38.5" stroke="#3c3c3c" stroke-width="1.2" fill="none"/><path d="M282 39H288L285 42Z" fill="#111"/></svg><svg class="abs" style="left:1860px;top:0" width="60" height="26"><path d="M9.5 13L5 17.5" stroke="#3a4aa0" stroke-width="2.6" stroke-linecap="round"/><circle cx="15.5" cy="10" r="4.6" fill="#eef2ff" stroke="#3a4aa0" stroke-width="1.6"/><path d="M32 13.5C32 10 35 8 38.5 8C42 8 44.5 10.5 44.5 13.5C44.5 16.5 42 18.5 38.5 18.5L35 20.5L35.5 18C33.5 17.5 32 15.5 32 13.5Z" fill="#fff" stroke="#909090" stroke-width="1"/><circle cx="47.5" cy="9.2" r="7.3" fill="#d8301c"/><path d="M46 6.8L48.3 5.2V13.5" stroke="#fff" stroke-width="2" fill="none"/></svg>
<svg class="abs" style="left:1480px;top:0" width="300" height="90"><defs><filter id="lsh" x="-10%" y="-10%" width="120%" height="130%"><feGaussianBlur stdDeviation="1.5"/></filter></defs><path d="M8 0H283C280 25 270 48 252 70C247 76 242 79 232 79H62C52 79 46 76 40 70C22 50 12 25 8 0Z" fill="#000" opacity="0.05" filter="url(#lsh)" transform="translate(0,1)"/><path d="M8 0H283C280 25 270 48 252 70C247 76 242 79 232 79H62C52 79 46 76 40 70C22 50 12 25 8 0Z" fill="#f4f4f4"/><path d="M70.6 43.3 L81.0 43.3 M75.8 43.3 L75.8 54.5 M82.2 54.5 L82.2 47.0 L87.3 47.0 M88.5 47.0 L96.2 47.0 L96.2 54.5 L88.5 54.5 L88.5 50.6 L96.2 50.6 M106.8 43.3 L106.8 54.5 L99.2 54.5 L99.2 47.0 L106.8 47.0 M110.4 47.0 L110.4 54.5 M110.4 43.6 L110.4 44.8 M114.2 54.5 L114.2 47.0 L120.6 47.0 L120.6 54.5 M130.6 54.5 L124.2 54.5 L124.2 47.0 L130.6 47.0 L130.6 58.3 L124.5 58.3 M142.6 43.3 L134.8 43.3 L134.8 54.5 M134.8 49.0 L141.5 49.0 M145.9 47.0 L145.9 54.5 M145.9 43.6 L145.9 44.8 M149.7 54.5 L149.7 47.0 L156.2 47.0 L156.2 54.5 M166.8 43.3 L166.8 54.5 L159.5 54.5 L159.5 47.0 L166.8 47.0 M177.5 54.5 L170.0 54.5 L170.0 47.0 L177.5 47.0 L177.5 50.6 L170.0 50.6 M180.6 54.5 L180.6 47.0 L185.3 47.0" stroke="#6e6e6e" stroke-width="1.25" fill="none" stroke-linejoin="round"/><path d="M71.1 29.0 L78.5 29.0 L78.5 20.9 M79.6 20.9 L85.3 20.9 L85.3 29.0 L79.6 29.0 M87.3 21.5 L87.3 29.0 L94.1 29.0 L94.1 22.2 M94.1 29.0 L101.9 29.0 L101.9 20.9 M105.6 16.8 L105.6 29.0 M108.3 29.0 L116.8 29.0 L116.8 20.9 L108.3 20.9 L108.3 29.0 M121.9 20.9 L121.9 29.0 L162.5 29.0 L162.5 21.5 M128.0 20.9 L139.5 20.9 M132.0 16.8 L136.8 14.1 M148.3 29.0 L148.3 21.5 M155.0 29.0 L155.0 21.5 M162.5 29.0 L169.9 29.0 L169.9 20.9 M170.6 29.0 L173.3 29.0 L173.3 33.4 L177.4 33.4 M173.3 29.0 L184.8 29.0 L184.8 14.8 L181.5 14.8" stroke="#6e6e6e" stroke-width="1.35" fill="none"/><rect x="91.5" y="14.4" width="1.8" height="1.4" fill="#6e6e6e"/><rect x="96.6" y="32.7" width="1.8" height="1.4" fill="#6e6e6e"/><rect x="99.0" y="32.7" width="1.8" height="1.4" fill="#6e6e6e"/><rect x="112.5" y="15.8" width="1.8" height="1.4" fill="#6e6e6e"/><rect x="143.7" y="14.4" width="1.8" height="1.4" fill="#6e6e6e"/><rect x="149.1" y="32.7" width="1.8" height="1.4" fill="#6e6e6e"/><rect x="151.4" y="32.7" width="1.8" height="1.4" fill="#6e6e6e"/><rect x="164.3" y="32.7" width="1.8" height="1.4" fill="#6e6e6e"/><rect x="166.7" y="32.7" width="1.8" height="1.4" fill="#6e6e6e"/><path d="M201.0 14.5 L209.6 14.5 L209.6 28.8 L206.5 31.8 L201.0 33.2 L201.0 14.5 M225.5 25.0 L215.6 25.0 L201.4 38.6 L201.4 47.2 L207.0 54.6 L225.5 54.6 L225.5 45.6 L209.2 45.6 L209.2 37.2 L212.6 33.7 L225.5 33.7 L225.5 25.0" stroke="#22e4f0" stroke-width="1.7" fill="none" stroke-linejoin="miter"/></svg>
</body></html>
